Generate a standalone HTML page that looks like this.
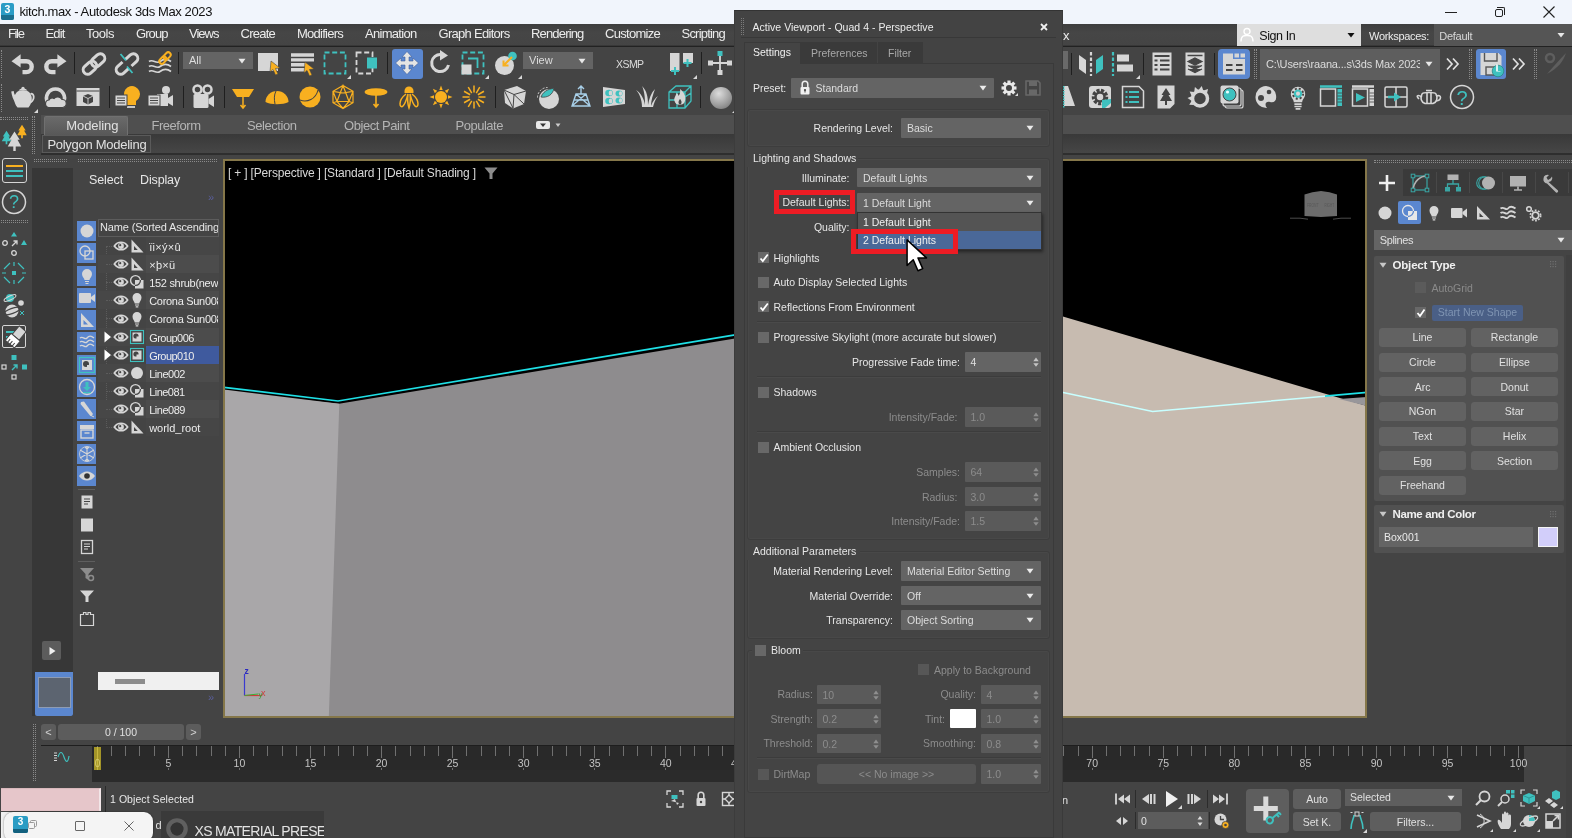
<!DOCTYPE html><html><head><meta charset="utf-8"><title>kitch.max - Autodesk 3ds Max 2023</title><style>*{box-sizing:border-box;margin:0;padding:0}
html,body{width:1572px;height:838px;overflow:hidden;background:#444;font-family:"Liberation Sans",sans-serif;font-size:11px;color:#e4e4e4}
.a{position:absolute}
.t{position:absolute;white-space:nowrap;line-height:1}
svg{position:absolute;overflow:visible}
#app{position:absolute;left:0;top:0;width:1572px;height:838px;overflow:hidden;will-change:transform}
</style></head><body><div id="app">
<!-- sec_top -->
<div class="a" style="left:0px;top:0px;width:1572px;height:24px;background:#f1f5fc;"></div>
<div class="a" style="left:1px;top:3px;width:13px;height:17px;background:#2a9cc6;border-radius:2px"></div>
<div class="a" style="left:1px;top:15px;width:13px;height:5px;background:#1b6e8e;border-radius:0 0 2px 2px"></div>
<div class="t" style="top:4.2px;font-size:10.5px;color:#fff;left:-142.50px;width:300px;text-align:center;font-weight:bold;">3</div>
<div class="t" style="top:4.9px;font-size:13px;color:#111;letter-spacing:-0.386px;left:19.5px;">kitch.max - Autodesk 3ds Max 2023</div>
<div class="a" style="left:1445px;top:12px;width:12px;height:1px;background:#222;"></div>
<div class="a" style="left:1495px;top:9px;width:8px;height:8px;border:1px solid #222;border-radius:2px"></div>
<div class="a" style="left:1497px;top:7px;width:8px;height:8px;border-top:1px solid #222;border-right:1px solid #222;border-radius:0 2px 0 0"></div>
<svg style="left:1541.0px;top:4.0px" width="16" height="16" viewBox="-8.0 -8.0 16 16"><path d="M-5.5-5.5L5.5 5.5M5.5-5.5L-5.5 5.5" stroke="#222" stroke-width="1.1" fill="none"/></svg>
<div class="a" style="left:0px;top:24px;width:1572px;height:22px;background:#444;background:linear-gradient(#3e3e3e,#464646 40%,#444)"></div>
<div class="a" style="left:0px;top:45px;width:1572px;height:1px;background:#383838;"></div>
<div class="a" style="left:0px;top:46px;width:1572px;height:1px;background:#222;"></div>
<div class="t" style="top:27.2px;font-size:13px;color:#ececec;letter-spacing:-1.361px;left:8px;">File</div>
<div class="t" style="top:27.2px;font-size:13px;color:#ececec;letter-spacing:-0.851px;left:45.5px;">Edit</div>
<div class="t" style="top:27.2px;font-size:13px;color:#ececec;letter-spacing:-0.470px;left:86px;">Tools</div>
<div class="t" style="top:27.2px;font-size:13px;color:#ececec;letter-spacing:-0.927px;left:136px;">Group</div>
<div class="t" style="top:27.2px;font-size:13px;color:#ececec;letter-spacing:-0.988px;left:189px;">Views</div>
<div class="t" style="top:27.2px;font-size:13px;color:#ececec;letter-spacing:-0.753px;left:240.5px;">Create</div>
<div class="t" style="top:27.2px;font-size:13px;color:#ececec;letter-spacing:-0.748px;left:297px;">Modifiers</div>
<div class="t" style="top:27.2px;font-size:13px;color:#ececec;letter-spacing:-0.701px;left:365px;">Animation</div>
<div class="t" style="top:27.2px;font-size:13px;color:#ececec;letter-spacing:-0.708px;left:438.5px;">Graph Editors</div>
<div class="t" style="top:27.2px;font-size:13px;color:#ececec;letter-spacing:-0.832px;left:531px;">Rendering</div>
<div class="t" style="top:27.2px;font-size:13px;color:#ececec;letter-spacing:-0.712px;left:605px;">Customize</div>
<div class="t" style="top:27.2px;font-size:13px;color:#ececec;letter-spacing:-0.786px;left:681.5px;">Scripting</div>
<div class="t" style="top:28.5px;font-size:13px;color:#ececec;left:1063px;">x</div>
<div class="a" style="left:1237px;top:24px;width:124px;height:22px;background:#dedede;"></div>
<svg style="left:1239.0px;top:27.0px" width="16" height="16" viewBox="-8.0 -8.0 16 16"><circle cx="0" cy="-3.5" r="3" fill="none" stroke="#fff" stroke-width="1.4"/><path d="M-6 6.5C-6 0-2.5 0.5 0 0.5S6 0 6 6.5" fill="none" stroke="#fff" stroke-width="1.4"/></svg>
<div class="t" style="top:29.5px;font-size:12.5px;color:#111;letter-spacing:-0.417px;left:1259.3px;">Sign In</div>
<svg style="left:1346.0px;top:30.0px" width="10" height="10" viewBox="-5.0 -5.0 10 10"><path d="M-3.5-2h7L0 2.5z" fill="#111"/></svg>
<div class="t" style="top:30.5px;font-size:11px;color:#ececec;letter-spacing:-0.306px;left:1369px;">Workspaces:</div>
<div class="a" style="left:1434px;top:24px;width:138px;height:22px;background:#555;"></div>
<div class="t" style="top:30.5px;font-size:11px;color:#d8d8d8;letter-spacing:-0.265px;left:1439.3px;">Default</div>
<svg style="left:1556.0px;top:29.5px" width="10" height="10" viewBox="-5.0 -5.0 10 10"><path d="M-3.5-2h7L0 2.5z" fill="#e8e8e8"/></svg>
<div class="a" style="left:0px;top:47px;width:1572px;height:67px;background:#444;"></div>
<div class="a" style="left:1px;top:50px;width:1px;height:28px;border-left:1px dotted #8a8a8a"></div>
<div class="a" style="left:1px;top:84px;width:1px;height:28px;border-left:1px dotted #8a8a8a"></div>
<svg style="left:6.0px;top:47.0px" width="32" height="32" viewBox="-16.0 -16.0 32 32"><path d="M-10.500-1.700L-1.400-8.700V4.500z" fill="#d6d6d6"/><path d="M-2-1.700H4.300A5.400 5.400 0 0 1 4.300 9.100H0.500" fill="none" stroke="#d6d6d6" stroke-width="4.400"/></svg>
<svg style="left:39.5px;top:47.0px" width="32" height="32" viewBox="-16.0 -16.0 32 32"><g transform="scale(-1,1)"><path d="M-10.500-1.700L-1.400-8.700V4.500z" fill="#d6d6d6"/><path d="M-2-1.700H4.300A5.400 5.400 0 0 1 4.300 9.100H0.500" fill="none" stroke="#d6d6d6" stroke-width="4.400"/></g></svg>
<div class="a" style="left:74px;top:52px;width:1px;height:22px;background:#1f1f1f;"></div>
<svg style="left:77.0px;top:47.0px" width="32" height="32" viewBox="-16.0 -16.0 32 32"><g transform="translate(1,1) rotate(-42)"><rect x="-13" y="-4.500" width="15" height="9" rx="4.500" fill="none" stroke="#d6d6d6" stroke-width="3"/><rect x="-2" y="-4.500" width="15" height="9" rx="4.500" fill="none" stroke="#d6d6d6" stroke-width="3"/></g></svg>
<svg style="left:110.0px;top:47.0px" width="32" height="32" viewBox="-16.0 -16.0 32 32"><g transform="translate(1,1) rotate(-42)"><path d="M-2-4.500H-8.500A4.500 4.500 0 0 0-8.500 4.500H-2M2-4.500H8.500A4.500 4.500 0 0 1 8.500 4.500H2" fill="none" stroke="#d6d6d6" stroke-width="3"/></g><path d="M-5.500-9L0-2.500M1 3.500L6.500 10" stroke="#3fc1bf" stroke-width="1.800"/></svg>
<svg style="left:144.0px;top:47.0px" width="32" height="32" viewBox="-16.0 -16.0 32 32"><path d="M-11-1.500C-7-4.500-4 1.500 0-1.500S7-4.500 11-1.500M-11 3.500C-7 .5-4 6.500 0 3.500S7 .5 11 3.500M-11 8.500C-7 5.500-4 11.500 0 8.500S7 5.500 11 8.500" fill="none" stroke="#d6d6d6" stroke-width="1.7"/><g transform="translate(5,-5) rotate(-45)"><rect x="-7" y="-2.500" width="8" height="5" rx="2.500" fill="none" stroke="#f8b020" stroke-width="2"/><rect x="-1" y="-2.500" width="8" height="5" rx="2.500" fill="none" stroke="#f8b020" stroke-width="2"/></g></svg>
<div class="a" style="left:178px;top:52px;width:1px;height:22px;background:#1f1f1f;"></div>
<div class="a" style="left:183px;top:52px;width:70px;height:17px;background:#646464;"></div><div class="t" style="top:55.0px;font-size:11px;color:#dcdcdc;left:189px;">All</div><svg style="left:237.0px;top:55.5px" width="10" height="10" viewBox="-5.0 -5.0 10 10"><path d="M-3.5-2.2h7L0 2.6z" fill="#e8e8e8"/></svg>
<svg style="left:253.0px;top:47.0px" width="32" height="32" viewBox="-16.0 -16.0 32 32"><rect x="-11" y="-10" width="20" height="18" fill="#d6d6d6"/><path d="M2-2L11 5L6.500 5.500L9 11L6.500 12L4 6.500L1 9z" fill="#f8b020" stroke="#444" stroke-width=".6"/></svg>
<svg style="left:286.0px;top:47.0px" width="32" height="32" viewBox="-16.0 -16.0 32 32"><path d="M-11-8h23M-11-3.100h23M-11 1.800h15M-11 6.700h15" stroke="#d6d6d6" stroke-width="3.400"/><path d="M3 -1L12 6L7.500 6.500L10 12L7.500 13L5 7.500L2 10z" fill="#f8b020" stroke="#444" stroke-width=".6"/></svg>
<svg style="left:319.0px;top:47.0px" width="32" height="32" viewBox="-16.0 -16.0 32 32"><rect x="-10.500" y="-10.500" width="21" height="21" fill="none" stroke="#3fc1bf" stroke-width="1.800" stroke-dasharray="5 2.700"/></svg>
<svg style="left:347px;top:75px" width="4" height="4" viewBox="0 0 4 4"><path d="M4 0V4H0z" fill="#d8d8d8"/></svg>
<svg style="left:351.0px;top:47.0px" width="32" height="32" viewBox="-16.0 -16.0 32 32"><rect x="-10.500" y="-10.500" width="16" height="21" fill="none" stroke="#d6d6d6" stroke-width="1.800" stroke-dasharray="5 2.700"/><rect x="0" y="-5.500" width="10" height="11" fill="#3fc1bf"/></svg>
<div class="a" style="left:387px;top:52px;width:1px;height:22px;background:#1f1f1f;"></div>
<div class="a" style="left:391.5px;top:49px;width:31.5px;height:30px;background:#5b87cf;border-radius:3px"></div>
<svg style="left:391.0px;top:47.0px" width="32" height="32" viewBox="-16.0 -16.0 32 32"><path d="M0-11.500L5-6H2V-2H6V-5L11.500 0L6 5V2H2V6H5L0 11.500L-5 6H-2V2H-6V5L-11.500 0L-6-5V-2H-2V-6H-5z" fill="#e4e4e4" stroke="#40609a" stroke-width=".6"/></svg>
<svg style="left:424.0px;top:47.0px" width="32" height="32" viewBox="-16.0 -16.0 32 32"><path d="M8.500 2A8.500 8.500 0 1 1 1-8.400" fill="none" stroke="#d6d6d6" stroke-width="3"/><path d="M0-13L8-7.500L0-2.500z" fill="#d6d6d6"/></svg>
<svg style="left:457.0px;top:47.0px" width="32" height="32" viewBox="-16.0 -16.0 32 32"><rect x="-10.500" y="-10.500" width="21" height="21" fill="none" stroke="#3fc1bf" stroke-width="1.800" stroke-dasharray="5 2.700"/><rect x="-11.500" y="1.500" width="10" height="10" fill="#d6d6d6"/><path d="M-5-4.500H4.500V5" fill="none" stroke="#3fc1bf" stroke-width="1.800"/></svg>
<svg style="left:485px;top:75px" width="4" height="4" viewBox="0 0 4 4"><path d="M4 0V4H0z" fill="#d8d8d8"/></svg>
<svg style="left:490.0px;top:47.0px" width="32" height="32" viewBox="-16.0 -16.0 32 32"><circle cx="-1.500" cy="2.500" r="9.500" fill="#d6d6d6"/><circle cx="6.500" cy="-7" r="4.300" fill="#3fc1bf"/><path d="M6-6L-2 2M-2.500-2.500V2.500H2.500" fill="none" stroke="#f8b020" stroke-width="2"/></svg>
<svg style="left:518px;top:75px" width="4" height="4" viewBox="0 0 4 4"><path d="M4 0V4H0z" fill="#d8d8d8"/></svg>
<div class="a" style="left:523px;top:52px;width:70px;height:17px;background:#646464;"></div><div class="t" style="top:55.0px;font-size:11px;color:#dcdcdc;left:529px;">View</div><svg style="left:577.0px;top:55.5px" width="10" height="10" viewBox="-5.0 -5.0 10 10"><path d="M-3.5-2.2h7L0 2.6z" fill="#e8e8e8"/></svg>
<div class="t" style="top:59.2px;font-size:10.5px;color:#dcdcdc;letter-spacing:-0.564px;left:616px;">XSMP</div>
<svg style="left:666.0px;top:47.0px" width="32" height="32" viewBox="-16.0 -16.0 32 32"><path d="M-12-10h9.500V8H-12zM1-10H11V0H1z" fill="#d6d6d6"/><path d="M-7 4v8M-11 8h8M5.500-4v8M1.500 0h8" stroke="#3fc1bf" stroke-width="2"/></svg>
<svg style="left:693px;top:75px" width="4" height="4" viewBox="0 0 4 4"><path d="M4 0V4H0z" fill="#d8d8d8"/></svg>
<div class="a" style="left:701px;top:52px;width:1px;height:22px;background:#1f1f1f;"></div>
<svg style="left:704.0px;top:47.0px" width="32" height="32" viewBox="-16.0 -16.0 32 32"><path d="M0-9V9M-10 0H10" stroke="#d6d6d6" stroke-width="1.800"/><rect x="-2.500" y="-12" width="5" height="5" fill="#3fc1bf"/><rect x="-2.500" y="7" width="5" height="5" fill="#d6d6d6"/><rect x="-12" y="-2.500" width="5" height="5" fill="#d6d6d6"/><rect x="7" y="-2.500" width="5" height="5" fill="#d6d6d6"/></svg>
<div class="a" style="left:1063px;top:51px;width:5px;height:18px;background:#6a6a6a;"></div>
<div class="a" style="left:1071px;top:53.2px;width:1px;height:22.0px;background:#1f1f1f;"></div>
<svg style="left:1076.0px;top:48.2px" width="32" height="32" viewBox="-16.0 -16.0 32 32"><path d="M-13-9L-6-4V10L-13 5z" fill="#d6d6d6"/><path d="M4-4L11-9V5L4 10z" fill="#3fc1bf"/><path d="M-1-12V12" stroke="#d6d6d6" stroke-width="2.200" stroke-dasharray="3.500 2"/></svg>
<svg style="left:1106.0px;top:48.2px" width="32" height="32" viewBox="-16.0 -16.0 32 32"><path d="M-9-12V12" stroke="#3fc1bf" stroke-width="2.200" stroke-dasharray="3.500 2"/><rect x="-5" y="-9.500" width="12" height="7" fill="#d6d6d6"/><rect x="-5" y=".5" width="16" height="7" fill="#d6d6d6"/></svg>
<svg style="left:1136px;top:75px" width="4" height="4" viewBox="0 0 4 4"><path d="M4 0V4H0z" fill="#d8d8d8"/></svg>
<div class="a" style="left:1143px;top:53.2px;width:1px;height:22.0px;background:#1f1f1f;"></div>
<svg style="left:1146.0px;top:48.2px" width="32" height="32" viewBox="-16.0 -16.0 32 32"><rect x="-9.500" y="-11.500" width="19" height="23" fill="#d6d6d6"/><path d="M-7.500-8h15M-2-3.500h9.500M-2 1h9.500M-2 5.500h9.500M-7.500-3.500h3M-7.500 1h3M-7.500 5.500h3" stroke="#444" stroke-width="2"/></svg>
<svg style="left:1179.0px;top:48.2px" width="32" height="32" viewBox="-16.0 -16.0 32 32"><rect x="-9.500" y="-11.500" width="19" height="23" fill="#d6d6d6"/><path d="M-7.500-8.500h15" stroke="#444" stroke-width="1.500"/><path d="M0-6L7-2.500L0 1L-7-2.500zM-7 1.500L0 5L7 1.500M-7 5L0 8.500L7 5" fill="#444" stroke="#444" stroke-width="1.200"/></svg>
<div class="a" style="left:1214px;top:53.2px;width:1px;height:22.0px;background:#1f1f1f;"></div>
<div class="a" style="left:1218px;top:49px;width:32px;height:30px;border:2px solid #5b87cf;border-radius:4px;background:#5b87cf"></div>
<svg style="left:1218.0px;top:48.0px" width="32" height="32" viewBox="-16.0 -16.0 32 32"><path d="M-11-10.500H-1V-5H11V10.500H-11z" fill="#d6d6d6"/><rect x="0.500" y="-10.500" width="4.500" height="4" fill="#d6d6d6"/><rect x="6.500" y="-10.500" width="4.500" height="4" fill="#d6d6d6"/><path d="M-8 1h6.500M-8 6h6.500M2 1h6.500M2 6h6.500" stroke="#444" stroke-width="2.200"/></svg>
<div class="a" style="left:1254px;top:49.0px;width:3px;height:30px;border-left:1px dotted #8a8a8a;border-right:1px dotted #8a8a8a"></div>
<div class="a" style="left:1260px;top:49px;width:180px;height:31px;background:#5e5e5e;"></div>
<div class="t" style="left:1266px;top:59px;font-size:11px;color:#dcdcdc;width:153.5px;overflow:hidden;letter-spacing:-0.154px">C:\Users\raana...s\3ds Max 2023</div>
<svg style="left:1424.0px;top:59.0px" width="10" height="10" viewBox="-5.0 -5.0 10 10"><path d="M-3.500-2.200h7L0 2.600z" fill="#e8e8e8"/></svg>
<svg style="left:1437.0px;top:48.2px" width="32" height="32" viewBox="-16.0 -16.0 32 32"><path d="M-6-5.500L-1 0L-6 5.500M0-5.500L5 0L0 5.500" fill="none" stroke="#e0e0e0" stroke-width="1.700"/></svg>
<div class="a" style="left:1469px;top:49.0px;width:3px;height:30px;border-left:1px dotted #8a8a8a;border-right:1px dotted #8a8a8a"></div>
<div class="a" style="left:1476px;top:49px;width:30px;height:30px;background:#5b87cf;border-radius:3px"></div>
<svg style="left:1475.0px;top:48.0px" width="32" height="32" viewBox="-16.0 -16.0 32 32"><path d="M-10.500-11H7.500L10.500-8V11H-10.500z" fill="#d6d6d6"/><rect x="-6" y="-11" width="12" height="8.500" fill="#5b87cf" opacity=".0"/><path d="M-6.500-11V-3H6V-11" fill="none" stroke="#555" stroke-width="1.400"/><rect x="-5" y="3" width="9" height="8" fill="none" stroke="#555" stroke-width="1.400"/><circle cx="7" cy="7" r="5.800" fill="#3fc1bf" stroke="#2a8a88" stroke-width=".8"/><path d="M6-10.500V7.500H9.500" fill="none" stroke="#fff" stroke-width="1.600" transform="translate(0,0) scale(1,.38) translate(0,11.500)"/></svg>
<svg style="left:1503.0px;top:48.2px" width="32" height="32" viewBox="-16.0 -16.0 32 32"><path d="M-6-5.500L-1 0L-6 5.500M0-5.500L5 0L0 5.500" fill="none" stroke="#e0e0e0" stroke-width="1.700"/></svg>
<div class="a" style="left:1534px;top:49.0px;width:3px;height:30px;border-left:1px dotted #8a8a8a;border-right:1px dotted #8a8a8a"></div>
<svg style="left:1540.0px;top:48.2px" width="32" height="32" viewBox="-16.0 -16.0 32 32"><circle cx="-6" cy="-6" r="4" fill="none" stroke="#5e5e5e" stroke-width="2.500"/><path d="M10-11C7-2 2 4-9 10C-4 4 3-4 10-11z" fill="#5e5e5e"/></svg>
<svg style="left:6.0px;top:81.0px" width="32" height="32" viewBox="-16.0 -16.0 32 32"><path d="M-5.500-4.500C-3-7.500 5-7.500 7.500-4.500C10.500-1 11 5 6.500 10.500H-4.500C-9 5-8.500-1-5.500-4.500z" fill="#d6d6d6"/><path d="M-3.500-6.500A4.800 3 0 0 1 5.500-6.500z" fill="#d6d6d6"/><circle cx="1" cy="-8.600" r="1.700" fill="#d6d6d6"/><path d="M-6.500 5.500C-9 3-10-1-10.800-5.500L-8.300-6C-8-3-7-1.500-5.500-.5z" fill="#d6d6d6"/><path d="M8.500-3C12-4.500 13.500 2 8.500 5.500" fill="none" stroke="#d6d6d6" stroke-width="1.800"/></svg>
<svg style="left:34px;top:109px" width="4" height="4" viewBox="0 0 4 4"><path d="M4 0V4H0z" fill="#d8d8d8"/></svg>
<svg style="left:39.0px;top:81.0px" width="32" height="32" viewBox="-16.0 -16.0 32 32"><path d="M-7.300 5.500A9 9 0 1 1 8.300 5.500" fill="none" stroke="#d6d6d6" stroke-width="3.600"/><path d="M-6.500 10.500A3.800 3.800 0 0 1-6 3A3.500 3.500 0 0 1-1 1.500A5 5 0 0 1 7 2.500A4 4 0 0 1 7.500 10.500z" fill="#d6d6d6" stroke="#444" stroke-width="1.200"/></svg>
<svg style="left:72.0px;top:81.0px" width="32" height="32" viewBox="-16.0 -16.0 32 32"><rect x="-11.500" y="-9" width="23" height="18" fill="#d6d6d6"/><path d="M-11.500-6H11.500" stroke="#444" stroke-width="1"/><path d="M0-3L5-1V5L0 7.500L-5 5V-1z" fill="#444"/><path d="M-5-1L0 1.500L5-1M0 1.500V7.500" stroke="#d6d6d6" stroke-width=".9" fill="none"/></svg>
<div class="a" style="left:109px;top:86px;width:1px;height:22px;background:#1f1f1f;"></div>
<svg style="left:111.0px;top:81.0px" width="32" height="32" viewBox="-16.0 -16.0 32 32"><path d="M-3-2A8 8 0 1 1 9 4V8H-1V4z" fill="#f8b020"/><path d="M0 10h8" stroke="#d6d6d6" stroke-width="1.800"/><rect x="-12" y="-2" width="12" height="11" fill="#d6d6d6" stroke="#444" stroke-width="1"/><path d="M-10 1h8M-10 3.500h8M-10 6h8" stroke="#444" stroke-width="1.200"/></svg>
<svg style="left:144.0px;top:81.0px" width="32" height="32" viewBox="-16.0 -16.0 32 32"><circle cx="6" cy="-7" r="4" fill="#d6d6d6"/><rect x="-3" y="-3" width="11" height="12" fill="#d6d6d6"/><path d="M8 1L13-2V9L8 6z" fill="#d6d6d6"/><rect x="-12" y="-2" width="12" height="11" fill="#d6d6d6" stroke="#444" stroke-width="1"/><path d="M-10 1h8M-10 3.500h8M-10 6h8" stroke="#444" stroke-width="1.200"/></svg>
<div class="a" style="left:183px;top:86px;width:1px;height:22px;background:#1f1f1f;"></div>
<svg style="left:187.0px;top:81.0px" width="32" height="32" viewBox="-16.0 -16.0 32 32"><circle cx="-5.500" cy="-7.500" r="4" fill="none" stroke="#d6d6d6" stroke-width="2.500"/><circle cx="4.500" cy="-7.500" r="4" fill="none" stroke="#d6d6d6" stroke-width="2.500"/><rect x="-9.500" y="-3" width="15" height="14" rx="1.500" fill="#d6d6d6"/><path d="M5.500 2L11-1.500V10L5.500 6.500z" fill="#d6d6d6"/></svg>
<div class="a" style="left:224px;top:86px;width:1px;height:22px;background:#1f1f1f;"></div>
<svg style="left:227.0px;top:81.0px" width="32" height="32" viewBox="-16.0 -16.0 32 32"><path d="M-11-8H11L6 0H-6z" fill="#f8b020"/><path d="M0 0V11M-2.500 8L0 11L2.500 8" stroke="#f8b020" stroke-width="1.500" fill="none"/></svg>
<svg style="left:261.0px;top:81.0px" width="32" height="32" viewBox="-16.0 -16.0 32 32"><path d="M-11.500 5A11.500 11 0 0 1 11.500 5C6 8-6 8-11.500 5z" fill="#f8b020"/><path d="M-1-6C-3-2-3 2-2 7" stroke="#444" stroke-width="1" fill="none"/></svg>
<svg style="left:294.0px;top:81.0px" width="32" height="32" viewBox="-16.0 -16.0 32 32"><circle r="10.500" fill="#f8b020"/><path d="M-10 3C-3 6 6 2 8-7" stroke="#444" stroke-width="1.100" fill="none"/></svg>
<svg style="left:327.0px;top:81.0px" width="32" height="32" viewBox="-16.0 -16.0 32 32"><path d="M0-11.500L10-5.700V5.700L0 11.500L-10 5.700V-5.700zM0-11.500L-6 4.500H6zM-10-5.700L-6 4.500L0 11.500L6 4.500L10-5.700L0-11.500M-10-5.700L0-4L10-5.700M-10 5.700L-6 4.500M10 5.700L6 4.500" fill="none" stroke="#f8b020" stroke-width="1.200"/></svg>
<svg style="left:360.0px;top:81.0px" width="32" height="32" viewBox="-16.0 -16.0 32 32"><ellipse cx="0" cy="-5" rx="11.500" ry="3.800" fill="#f8b020"/><path d="M0-2V10M-2.500 7L0 10L2.500 7" stroke="#f8b020" stroke-width="1.600" fill="none"/></svg>
<svg style="left:393.0px;top:81.0px" width="32" height="32" viewBox="-16.0 -16.0 32 32"><path d="M-4.500-6A4.500 4.500 0 0 1 4.500-6V-4H-4.500z" fill="#f8b020"/><path d="M-3-3C-12 4-9 12-6 9C-3 6-2 0-1-3M3-3C12 4 9 12 6 9C3 6 2 0 1-3M-1-3C-2 5 0 11 0 11C0 11 2 5 1-3" fill="none" stroke="#f8b020" stroke-width="1.500"/></svg>
<svg style="left:425.0px;top:81.0px" width="32" height="32" viewBox="-16.0 -16.0 32 32"><circle r="6" fill="#f8b020"/><path d="M-1.700-7L0-11.500L1.700-7z" transform="rotate(0)" fill="#f8b020"/><path d="M-1.700-7L0-11.500L1.700-7z" transform="rotate(45)" fill="#f8b020"/><path d="M-1.700-7L0-11.500L1.700-7z" transform="rotate(90)" fill="#f8b020"/><path d="M-1.700-7L0-11.500L1.700-7z" transform="rotate(135)" fill="#f8b020"/><path d="M-1.700-7L0-11.500L1.700-7z" transform="rotate(180)" fill="#f8b020"/><path d="M-1.700-7L0-11.500L1.700-7z" transform="rotate(225)" fill="#f8b020"/><path d="M-1.700-7L0-11.500L1.700-7z" transform="rotate(270)" fill="#f8b020"/><path d="M-1.700-7L0-11.500L1.700-7z" transform="rotate(315)" fill="#f8b020"/></svg>
<svg style="left:458.0px;top:81.0px" width="32" height="32" viewBox="-16.0 -16.0 32 32"><path d="M0-4.500V-11.500" transform="rotate(0)" stroke="#f8b020" stroke-width="1.500"/><path d="M0-4.500V-11.500" transform="rotate(30)" stroke="#f8b020" stroke-width="1.500"/><path d="M0-4.500V-11.500" transform="rotate(60)" stroke="#f8b020" stroke-width="1.500"/><path d="M0-4.500V-11.500" transform="rotate(90)" stroke="#f8b020" stroke-width="1.500"/><path d="M0-4.500V-11.500" transform="rotate(120)" stroke="#f8b020" stroke-width="1.500"/><path d="M0-4.500V-11.500" transform="rotate(150)" stroke="#f8b020" stroke-width="1.500"/><path d="M0-4.500V-11.500" transform="rotate(180)" stroke="#f8b020" stroke-width="1.500"/><path d="M0-4.500V-11.500" transform="rotate(210)" stroke="#f8b020" stroke-width="1.500"/><path d="M0-4.500V-11.500" transform="rotate(240)" stroke="#f8b020" stroke-width="1.500"/><path d="M0-4.500V-11.500" transform="rotate(270)" stroke="#f8b020" stroke-width="1.500"/><path d="M0-4.500V-11.500" transform="rotate(300)" stroke="#f8b020" stroke-width="1.500"/><path d="M0-4.500V-11.500" transform="rotate(330)" stroke="#f8b020" stroke-width="1.500"/></svg>
<div class="a" style="left:495px;top:86px;width:1px;height:22px;background:#1f1f1f;"></div>
<svg style="left:499.0px;top:81.0px" width="32" height="32" viewBox="-16.0 -16.0 32 32"><path d="M-11-7L2-11L11-6L9 7L-2 11.500L-10 6z" fill="#d6d6d6"/><path d="M-11-7L-1-2.500L11-6M-1-2.500L-2 11.500M-1-2.500L9 7M-11-7L-2 11" stroke="#444" stroke-width="1" fill="none"/></svg>
<svg style="left:532.0px;top:81.0px" width="32" height="32" viewBox="-16.0 -16.0 32 32"><circle cx="1" cy="2" r="10" fill="#d6d6d6"/><path d="M-9 2A10 10 0 0 1 1-8" fill="none" stroke="#d6d6d6" stroke-width="1" stroke-dasharray="2 1.500" transform="translate(-1.500,-1.500)"/><path d="M-7 0C-4-8 4-8 6-9C5-2-1 1-7 0z" fill="#3fc1bf" stroke="#444" stroke-width=".8"/></svg>
<svg style="left:565.0px;top:81.0px" width="32" height="32" viewBox="-16.0 -16.0 32 32"><path d="M0-11V-3M-3-8L0-11L3-8M-5-3H5L9 9H-9zM-5-3L9 9M5-3L-9 9M-7 3H7" fill="none" stroke="#a8cfe8" stroke-width="1.400"/></svg>
<svg style="left:598.0px;top:81.0px" width="32" height="32" viewBox="-16.0 -16.0 32 32"><path d="M-11-10L11-7V7L-11 10z" fill="#d6d6d6"/><ellipse cx="-5" cy="-4" rx="3.800" ry="3.300" fill="#3fc1bf"/><ellipse cx="5" cy="-3.500" rx="3.500" ry="3" fill="#3fc1bf"/><ellipse cx="-5" cy="4" rx="3.800" ry="3.300" fill="#3fc1bf"/><ellipse cx="5" cy="3.500" rx="3.500" ry="3" fill="#3fc1bf"/><ellipse cx="-3.500" cy="-4" rx="1.800" ry="2.600" fill="#d6d6d6"/><ellipse cx="6.500" cy="-3.500" rx="1.600" ry="2.300" fill="#d6d6d6"/><ellipse cx="-3.500" cy="4" rx="1.800" ry="2.600" fill="#d6d6d6"/><ellipse cx="6.500" cy="3.500" rx="1.600" ry="2.300" fill="#d6d6d6"/></svg>
<svg style="left:631.0px;top:81.0px" width="32" height="32" viewBox="-16.0 -16.0 32 32"><path d="M-5 10C-5 2-8-4-11-7C-6-4-3 2-2 8C-2-1-3-7-5-11C0-6 1 0 1 8C2 2 4-4 8-8C6-2 4 3 4 9C6 4 8 1 11-1C8 3 7 6 6 10z" fill="#d6d6d6"/></svg>
<svg style="left:664.0px;top:81.0px" width="32" height="32" viewBox="-16.0 -16.0 32 32"><path d="M-11-5L-4-11H11V4L5 11H-11zM-11-5H5V11M5-5L11-11M-11 3H5M-3-5V11M3.500-3.500L11-11M5 0L11-4" fill="none" stroke="#3fc1bf" stroke-width="1.300"/><path d="M0-8C5-4 6 0 5 4A5.500 5.500 0 0 1-5.500 4C-6.500 1-4-1-3.500-4C-2-3-1.500-2-1.500-1C0-3 0.500-5 0-8z" fill="#d6d6d6"/><path d="M0 2C2 4 2 7 0 7.500C-2 7-2 4 0 2z" fill="#444"/></svg>
<div class="a" style="left:700px;top:86px;width:1px;height:22px;background:#1f1f1f;"></div>
<div class="a" style="left:710px;top:87px;width:22px;height:22px;border-radius:50%;background:radial-gradient(circle at 40% 30%,#dcdcdc,#a0a0a0 55%,#6a6a6a)"></div>
<svg style="left:732px;top:109px" width="4" height="4" viewBox="0 0 4 4"><path d="M4 0V4H0z" fill="#d8d8d8"/></svg>
<svg style="left:1052.0px;top:81.0px" width="32" height="32" viewBox="-16.0 -16.0 32 32"><path d="M0-11L7 9H-4V-11z" fill="#d6d6d6"/><path d="M-5-11V11" stroke="#3fc1bf" stroke-width="3" stroke-dasharray="1.500 1"/></svg>
<svg style="left:1084.0px;top:81.0px" width="32" height="32" viewBox="-16.0 -16.0 32 32"><rect x="-11" y="-11" width="22" height="22" rx="3" fill="#d6d6d6"/><circle r="6.500" fill="none" stroke="#444" stroke-width="3.500" stroke-dasharray="3 1.400"/><circle r="4.500" fill="none" stroke="#444" stroke-width="2.500"/><path d="M2 3L11 2V6L5 11H2z" fill="#3fc1bf"/></svg>
<svg style="left:1117.0px;top:81.0px" width="32" height="32" viewBox="-16.0 -16.0 32 32"><path d="M-10.500-10.500H6L10.500-6V10.500H-10.500z" fill="#444" stroke="#d6d6d6" stroke-width="1.500"/><path d="M-4-5H6M-4 0H6M-4 5H6" stroke="#3fc1bf" stroke-width="2"/><path d="M-7.500-5h2M-7.500 0h2M-7.500 5h2" stroke="#3fc1bf" stroke-width="2"/></svg>
<svg style="left:1150.0px;top:81.0px" width="32" height="32" viewBox="-16.0 -16.0 32 32"><path d="M-8.500-11.500H8.500V7L4 11.500H-8.500z" fill="#d6d6d6"/><path d="M0-9L4.500-2H2.500L6 4H1V8H-1V4H-6L-2.500-2H-4.500z" fill="#444"/></svg>
<svg style="left:1183.0px;top:81.0px" width="32" height="32" viewBox="-16.0 -16.0 32 32"><circle cx="1" cy="1.500" r="7.500" fill="none" stroke="#d6d6d6" stroke-width="3.500"/><path d="M-2.500-8.500L0-12.500L2-8.500z" transform="translate(1,1.500) rotate(-120)" fill="#d6d6d6"/><path d="M-2.500-8.500L0-12.500L2-8.500z" transform="translate(1,1.500) rotate(-88)" fill="#d6d6d6"/><path d="M-2.500-8.500L0-12.500L2-8.500z" transform="translate(1,1.500) rotate(-56)" fill="#d6d6d6"/><path d="M-2.500-8.500L0-12.500L2-8.500z" transform="translate(1,1.500) rotate(-24)" fill="#d6d6d6"/><path d="M-2.500-8.500L0-12.500L2-8.500z" transform="translate(1,1.500) rotate(8)" fill="#d6d6d6"/><path d="M-2.500-8.500L0-12.500L2-8.500z" transform="translate(1,1.500) rotate(40)" fill="#d6d6d6"/></svg>
<svg style="left:1216.0px;top:81.0px" width="32" height="32" viewBox="-16.0 -16.0 32 32"><rect x="-7" y="-7" width="18" height="18" rx="2" fill="none" stroke="#d6d6d6" stroke-width="1.200"/><rect x="-9" y="-9" width="18" height="18" rx="2" fill="#444" stroke="#d6d6d6" stroke-width="1.200"/><rect x="-11.500" y="-11.500" width="18" height="18" rx="2" fill="#d6d6d6"/><circle cx="-2.500" cy="-2.500" r="6.500" fill="#3fc1bf" stroke="#444" stroke-width="1"/><circle cx="-4.500" cy="-5" r="1.600" fill="#e8ffff"/></svg>
<svg style="left:1249.0px;top:81.0px" width="32" height="32" viewBox="-16.0 -16.0 32 32"><path d="M1-11A11 11 0 1 0 2 11C-1 7 1 4 5 5C9 6 12 4 11-2A11 11 0 0 0 1-11z" fill="#d6d6d6"/><circle cx="-4" cy="1" r="3" fill="#444"/><circle cx="4" cy="-5" r="2.300" fill="#444"/></svg>
<svg style="left:1282.0px;top:81.0px" width="32" height="32" viewBox="-16.0 -16.0 32 32"><g transform="translate(0,.5) scale(1.200)"><path d="M-6-3A6 6 0 1 1 6-3C6 0 3.500 1.500 3.500 4H-3.500C-3.500 1.500-6 0-6-3z" fill="#d6d6d6"/><path d="M-3 5.500h6M-3 7.500h6M-2 9.500h4" stroke="#d6d6d6" stroke-width="1.300"/><circle cy="-3.200" r="2.600" fill="none" stroke="#3fc1bf" stroke-width="1.800"/><circle cy="-3.200" r="4.300" fill="none" stroke="#444" stroke-width="1.500" stroke-dasharray="1.700 1.700"/></g></svg>
<svg style="left:1315.0px;top:81.0px" width="32" height="32" viewBox="-16.0 -16.0 32 32"><rect x="-10.500" y="-8" width="15" height="17" fill="none" stroke="#d6d6d6" stroke-width="1.500"/><path d="M-11-10.500H11" stroke="#3fc1bf" stroke-width="2.500"/><rect x="6.500" y="-8" width="4.500" height="17" fill="#3fc1bf"/><path d="M6.500-4h4.500M6.500-1h4.500M6.500 2h4.500M6.500 5h4.500" stroke="#444" stroke-width=".8"/></svg>
<svg style="left:1347.0px;top:81.0px" width="32" height="32" viewBox="-16.0 -16.0 32 32"><rect x="-10.500" y="-8" width="15" height="17" fill="none" stroke="#d6d6d6" stroke-width="1.500"/><path d="M-11-10.500H11" stroke="#d6d6d6" stroke-width="2.500"/><rect x="6.500" y="-8" width="4.500" height="17" fill="#d6d6d6"/><path d="M6.500-4h4.500M6.500-1h4.500M6.500 2h4.500M6.500 5h4.500" stroke="#444" stroke-width=".8"/><path d="M-7-4L2 .5L-7 5z" fill="#3fc1bf"/></svg>
<svg style="left:1380.0px;top:81.0px" width="32" height="32" viewBox="-16.0 -16.0 32 32"><rect x="-11" y="-10" width="22" height="20" rx="1.500" fill="none" stroke="#d6d6d6" stroke-width="1.500"/><path d="M0-10V10M-11 0H11" stroke="#d6d6d6" stroke-width="1.500"/><path d="M-8-1.300H-2V-4.500L5 0L-2 4.500V1.300H-8z" fill="#3fc1bf"/></svg>
<svg style="left:1413.0px;top:81.0px" width="32" height="32" viewBox="-16.0 -16.0 32 32"><path d="M-7-3C-6-5 6-5 7-3C9 1 8 5 4 6.500H-4C-8 5-9 1-7-3z" fill="none" stroke="#d6d6d6" stroke-width="1.600"/><path d="M-3-6.500h6M-7 0C-12-3-13-1-10 2M7-1C13-3 13 3 7 4M-2-4V6M2-4V6" fill="none" stroke="#d6d6d6" stroke-width="1.600"/></svg>
<svg style="left:1446.0px;top:81.0px" width="32" height="32" viewBox="-16.0 -16.0 32 32"><circle r="11.500" fill="none" stroke="#d6d6d6" stroke-width="1.500"/></svg>
<div class="t" style="top:87.5px;font-size:20px;color:#3fc1bf;left:1312.00px;width:300px;text-align:center;">?</div>
<div class="a" style="left:0px;top:117px;width:28px;height:3px;border-top:1px dotted #8a8a8a;border-bottom:1px dotted #8a8a8a"></div>
<div class="a" style="left:32px;top:116px;width:3px;height:38px;border-left:1px dotted #8a8a8a;border-right:1px dotted #8a8a8a"></div>
<svg style="left:-2.0px;top:122.0px" width="32" height="32" viewBox="-16.0 -16.0 32 32"><g transform="translate(-7.500,0) scale(1.050)"><path d="M0-7L3.500-1.500H2L4.500 3H.8V6H-.8V3H-4.500L-2 -1.500H-3.500z" fill="#3fc1bf"/></g><g transform="translate(8,-6) scale(1.050)"><path d="M0-7L3.500-1.500H2L4.500 3H.8V6H-.8V3H-4.500L-2 -1.500H-3.500z" fill="#f8b020"/></g><g transform="translate(.5,4) scale(1.500)"><path d="M0-7L3.500-1.500H2L4.500 3H.8V6H-.8V3H-4.500L-2 -1.500H-3.500z" fill="#d6d6d6"/></g></svg>
<div class="a" style="left:41px;top:115px;width:693px;height:19px;background:#4f4f4f;"></div>
<div class="a" style="left:41px;top:134px;width:693px;height:19px;background:#3a3a3a;background:linear-gradient(#393939,#464646)"></div>
<div class="a" style="left:41px;top:153px;width:693px;height:2px;background:#2e2e2e;"></div>
<div class="a" style="left:44px;top:116px;width:84px;height:19px;background:linear-gradient(#6a6a6a,#585858);border:1px solid #707070;border-bottom:none;border-radius:2px 2px 0 0"></div>
<div class="t" style="top:119.0px;font-size:13px;color:#e0e0e0;letter-spacing:-0.094px;left:66.3px;">Modeling</div>
<div class="t" style="top:118.9px;font-size:13px;color:#b4b4b4;letter-spacing:-0.466px;left:151.5px;">Freeform</div>
<div class="t" style="top:118.9px;font-size:13px;color:#b4b4b4;letter-spacing:-0.442px;left:247px;">Selection</div>
<div class="t" style="top:118.9px;font-size:13px;color:#b4b4b4;letter-spacing:-0.443px;left:344px;">Object Paint</div>
<div class="t" style="top:118.9px;font-size:13px;color:#b4b4b4;letter-spacing:-0.478px;left:455.5px;">Populate</div>
<div class="a" style="left:536px;top:121px;width:14px;height:8px;background:#e8e8e8;border-radius:2px"></div>
<svg style="left:538.0px;top:120.0px" width="10" height="10" viewBox="-5.0 -5.0 10 10"><path d="M-3-1.500h6L0 2z" fill="#333"/></svg>
<svg style="left:553.0px;top:120.0px" width="10" height="10" viewBox="-5.0 -5.0 10 10"><path d="M-2.500-1.500h5L0 2z" fill="#ccc"/></svg>
<div class="a" style="left:42px;top:135px;width:109px;height:18px;background:#414141;border:1px solid #5a5a5a"></div>
<div class="t" style="top:138.0px;font-size:13px;color:#e0e0e0;letter-spacing:-0.272px;left:47.4px;">Polygon Modeling</div>
<div class="a" style="left:1062px;top:115px;width:510px;height:19px;background:#4f4f4f;"></div>
<div class="a" style="left:1062px;top:134px;width:510px;height:19px;background:#3a3a3a;background:linear-gradient(#393939,#464646)"></div>
<div class="a" style="left:1062px;top:153px;width:510px;height:2px;background:#2e2e2e;"></div>
<!-- sec_left -->
<div class="a" style="left:0px;top:155px;width:224px;height:565px;background:#444;"></div>
<div class="a" style="left:2px;top:158px;width:25px;height:25px;border:1.500px solid #d6d6d6;border-radius:3px 7px 3px 3px"></div>
<div class="a" style="left:6px;top:165px;width:17px;height:2px;background:#f8b020;"></div>
<div class="a" style="left:6px;top:170px;width:17px;height:2px;background:#3fc1bf;"></div>
<div class="a" style="left:6px;top:175px;width:17px;height:2px;background:#3fc1bf;"></div>
<svg style="left:-2.0px;top:185.5px" width="32" height="32" viewBox="-16.0 -16.0 32 32"><circle r="11.500" fill="none" stroke="#d6d6d6" stroke-width="1.500"/></svg>
<div class="t" style="top:193.0px;font-size:18px;color:#3fc1bf;left:-136.00px;width:300px;text-align:center;">?</div>
<div class="a" style="left:1px;top:220px;width:27px;height:3px;border-top:1px dotted #8a8a8a;border-bottom:1px dotted #8a8a8a"></div>
<svg style="left:-2.0px;top:226.5px" width="32" height="32" viewBox="-16.0 -16.0 32 32"><path d="M0-11L3-6.500H-3z" fill="#3fc1bf"/><path d="M10-3L13 2H7z" fill="#3fc1bf"/><circle cx="-9" cy="0" r="2.300" fill="none" stroke="#d6d6d6" stroke-width="1.300"/><circle cx="0" cy="10" r="2.300" fill="none" stroke="#d6d6d6" stroke-width="1.300"/><path d="M-2 3L3-2M-.5-2H3V1.500" fill="none" stroke="#d6d6d6" stroke-width="1.300"/></svg>
<svg style="left:-2.0px;top:257.0px" width="32" height="32" viewBox="-16.0 -16.0 32 32"><path d="M-4-10L-10-4M4-10L10-4M-10 4L-4 10M10 4L4 10M0-11V-7M0 7V11M-12 0H-8M8 0H12" stroke="#3fc1bf" stroke-width="1.200" fill="none"/><rect x="-2" y="-2" width="4" height="4" fill="#3fc1bf"/></svg>
<svg style="left:-2.0px;top:289.0px" width="32" height="32" viewBox="-16.0 -16.0 32 32"><circle cx="-4" cy="-7" r="4" fill="#3fc1bf"/><ellipse cx="-4" cy="-7" rx="6.500" ry="2" fill="none" stroke="#d6d6d6" stroke-width="1" transform="rotate(-25 -4 -7)"/><circle cx="7" cy="-2" r="2.800" fill="#d6d6d6"/><circle cx="-2" cy="6" r="6.500" fill="#d6d6d6"/><ellipse cx="-2" cy="6" rx="9" ry="2.500" fill="none" stroke="#444" stroke-width="1.200" transform="rotate(-20 -2 6)"/><path d="M6 6L10 10M10 6L6 10" stroke="#3fc1bf" stroke-width="1"/></svg>
<div class="a" style="left:2px;top:325px;width:24px;height:23px;border:1.500px solid #d6d6d6;border-radius:2px"></div>
<div class="a" style="left:6px;top:331px;width:11px;height:2px;background:#3fc1bf;"></div>
<div class="a" style="left:6px;top:336px;width:8px;height:2px;background:#3fc1bf;"></div>
<svg style="left:-1.0px;top:322.0px" width="32" height="32" viewBox="-16.0 -16.0 32 32"><g transform="rotate(40)"><rect x="-4.500" y="-12" width="9" height="11" fill="#d6d6d6" stroke="#444" stroke-width="1"/><rect x="-6" y="-1" width="12" height="9" fill="#fff" stroke="#444" stroke-width="1"/><path d="M-3 8V4M0 8V4M3 8V4" stroke="#444" stroke-width="1"/></g></svg>
<svg style="left:-2.0px;top:351.0px" width="32" height="32" viewBox="-16.0 -16.0 32 32"><rect x="-2.500" y="-12" width="5" height="5" fill="#3fc1bf"/><rect x="8" y="-2.500" width="5" height="5" fill="#3fc1bf"/><rect x="-12" y="-2" width="4" height="4" fill="none" stroke="#d6d6d6" stroke-width="1.200"/><rect x="-2" y="8" width="4" height="4" fill="none" stroke="#d6d6d6" stroke-width="1.200"/><path d="M-2 3L3-2M-.5-2H3V1.500" fill="none" stroke="#3fc1bf" stroke-width="1.400"/></svg>
<div class="a" style="left:34px;top:159px;width:33px;height:3px;border-top:1px dotted #8a8a8a;border-bottom:1px dotted #8a8a8a"></div>
<div class="a" style="left:78px;top:159px;width:139px;height:3px;border-top:1px dotted #8a8a8a;border-bottom:1px dotted #8a8a8a"></div>
<div class="a" style="left:32px;top:168px;width:41px;height:548px;background:#373737;"></div>
<div class="t" style="top:173.8px;font-size:12.5px;color:#e6e6e6;letter-spacing:-0.124px;left:89px;">Select</div>
<div class="t" style="top:173.8px;font-size:12.5px;color:#e6e6e6;letter-spacing:-0.141px;left:140px;">Display</div>
<div class="t" style="top:191.5px;font-size:11px;color:#5a5e9a;left:208px;">»</div>
<div class="t" style="top:691.5px;font-size:11px;color:#5a5e9a;left:208px;">»</div>
<div class="a" style="left:77px;top:221px;width:19px;height:20px;background:#5b87cf;"></div>
<svg style="left:76.5px;top:221.0px" width="20" height="20" viewBox="-10.0 -10.0 20 20"><circle r="6.500" fill="#d6d6d6"/></svg>
<div class="a" style="left:77px;top:243px;width:19px;height:20px;background:#5b87cf;"></div>
<svg style="left:76.5px;top:243.0px" width="20" height="20" viewBox="-10.0 -10.0 20 20"><circle cx="-2" cy="-2" r="5" fill="none" stroke="#d6d6d6" stroke-width="1.300"/><rect x="-2" y="-2" width="8" height="8" fill="none" stroke="#d6d6d6" stroke-width="1.300"/></svg>
<div class="a" style="left:77px;top:266px;width:19px;height:20px;background:#5b87cf;"></div>
<svg style="left:76.5px;top:266.0px" width="20" height="20" viewBox="-10.0 -10.0 20 20"><path d="M-5-2A5 5 0 1 1 5-2C5 1 2.500 2 2.500 4H-2.500C-2.500 2-5 1-5-2z" fill="#d6d6d6"/><path d="M-2 5.500h4M-1.500 7.500h3" stroke="#d6d6d6" stroke-width="1.200"/></svg>
<div class="a" style="left:77px;top:288px;width:19px;height:20px;background:#5b87cf;"></div>
<svg style="left:76.5px;top:288.0px" width="20" height="20" viewBox="-10.0 -10.0 20 20"><rect x="-8" y="-5" width="12" height="10" rx="1" fill="#d6d6d6"/><path d="M4-1L8-4V4L4 1z" fill="#d6d6d6"/></svg>
<div class="a" style="left:77px;top:310px;width:19px;height:20px;background:#5b87cf;"></div>
<svg style="left:76.5px;top:310.0px" width="20" height="20" viewBox="-10.0 -10.0 20 20"><path d="M-6-7V7H7zM-3.500 0V4.500H1z" fill="#d6d6d6" fill-rule="evenodd"/></svg>
<div class="a" style="left:77px;top:332px;width:19px;height:20px;background:#5b87cf;"></div>
<svg style="left:76.5px;top:332.0px" width="20" height="20" viewBox="-10.0 -10.0 20 20"><path d="M-7-4C-4-6.500-2-1.500 0-4S4-6.500 7-4M-7 0C-4-2.500-2 2.500 0 0S4-2.500 7 0M-7 4C-4 1.500-2 6.500 0 4S4 1.500 7 4" fill="none" stroke="#d6d6d6" stroke-width="1.300"/></svg>
<div class="a" style="left:77px;top:355px;width:19px;height:20px;background:#5b87cf;"></div>
<svg style="left:76.5px;top:355.0px" width="20" height="20" viewBox="-10.0 -10.0 20 20"><rect x="-7.500" y="-7.500" width="15" height="15" fill="none" stroke="#3fc1bf" stroke-width="1.200"/><rect x="-5" y="-5" width="10" height="10" fill="#d6d6d6"/><circle cx="-1" cy="-1" r="3" fill="#444"/><rect x="0" y="0" width="4" height="4" fill="#d6d6d6"/></svg>
<div class="a" style="left:77px;top:377px;width:19px;height:20px;background:#5b87cf;"></div>
<svg style="left:76.5px;top:377.0px" width="20" height="20" viewBox="-10.0 -10.0 20 20"><circle r="7.500" fill="none" stroke="#d6d6d6" stroke-width="1.300"/><path d="M-1.500-5h3V0H4L0 4L-4 0h2.500z" fill="#3fc1bf"/><path d="M-4 5.500h8" stroke="#3fc1bf" stroke-width="1.300"/></svg>
<div class="a" style="left:77px;top:399px;width:19px;height:20px;background:#5b87cf;"></div>
<svg style="left:76.5px;top:399.0px" width="20" height="20" viewBox="-10.0 -10.0 20 20"><path d="M-6-7L-3-7.500L6 5L4.500 7L3 6.500L-6.500-5z" fill="#d6d6d6"/><path d="M3 6L7 8" stroke="#d6d6d6" stroke-width="1"/></svg>
<div class="a" style="left:77px;top:421px;width:19px;height:20px;background:#5b87cf;"></div>
<svg style="left:76.5px;top:421.0px" width="20" height="20" viewBox="-10.0 -10.0 20 20"><rect x="-7" y="-6" width="14" height="4" fill="#d6d6d6"/><rect x="-6" y="-1" width="12" height="8" fill="none" stroke="#d6d6d6" stroke-width="1.400"/><path d="M-2.500 2h5" stroke="#d6d6d6" stroke-width="1.400"/></svg>
<div class="a" style="left:77px;top:444px;width:19px;height:20px;background:#5b87cf;"></div>
<svg style="left:76.5px;top:444.0px" width="20" height="20" viewBox="-10.0 -10.0 20 20"><path d="M0-8V8M-7-4L7 4M-7 4L7-4M-2-7L0-5L2-7M-2 7L0 5L2 7" stroke="#d6d6d6" stroke-width="1.100" fill="none"/><circle r="7.500" fill="none" stroke="#d6d6d6" stroke-width=".8"/></svg>
<div class="a" style="left:77px;top:466px;width:19px;height:20px;background:#5b87cf;"></div>
<svg style="left:76.5px;top:466.0px" width="20" height="20" viewBox="-10.0 -10.0 20 20"><path d="M-8 0C-4-6 4-6 8 0C4 6-4 6-8 0z" fill="#d6d6d6"/><circle r="2.800" fill="#333"/></svg>
<svg style="left:76.5px;top:492.0px" width="20" height="20" viewBox="-10.0 -10.0 20 20"><rect x="-5.500" y="-6.500" width="11" height="13" fill="#d6d6d6"/><path d="M-3-3h6M-3-.5h6M-3 2h4" stroke="#444" stroke-width="1"/></svg>
<svg style="left:76.5px;top:514.5px" width="20" height="20" viewBox="-10.0 -10.0 20 20"><rect x="-6" y="-6.500" width="12" height="13" fill="#d6d6d6"/></svg>
<svg style="left:76.5px;top:537.0px" width="20" height="20" viewBox="-10.0 -10.0 20 20"><rect x="-5.500" y="-6.500" width="11" height="13" fill="none" stroke="#d6d6d6" stroke-width="1.300"/><path d="M-3-3h6M-3-.5h6M-3 2h4" stroke="#d6d6d6" stroke-width="1"/></svg>
<div class="a" style="left:78px;top:561px;width:17px;height:1px;background:#5e5e5e;"></div>
<div class="a" style="left:78px;top:489px;width:17px;height:1px;background:#5e5e5e;"></div>
<svg style="left:76.5px;top:564.0px" width="20" height="20" viewBox="-10.0 -10.0 20 20"><path d="M-7-6H7L1.500 0V6L-1.500 4V0z" fill="#8c8c8c"/><circle cx="4" cy="4" r="2.500" fill="none" stroke="#8c8c8c" stroke-width="1.500"/></svg>
<svg style="left:76.5px;top:585.5px" width="20" height="20" viewBox="-10.0 -10.0 20 20"><path d="M-7-5.500H7L1.500 .5V6L-1.500 6V.5z" fill="#d6d6d6"/></svg>
<svg style="left:76.5px;top:608.5px" width="20" height="20" viewBox="-10.0 -10.0 20 20"><path d="M-6.500 6.500V-4.500H-3.500V-6.500H-1V-4.500H1V-6.500H3.500V-4.500H6.500V6.500z" fill="none" stroke="#d6d6d6" stroke-width="1.200"/></svg>
<div class="a" style="left:98px;top:219px;width:121px;height:18px;background:#444;border:1px solid #5c5c5c"></div>
<div class="t" style="left:100px;top:222px;font-size:11px;color:#e6e6e6;width:118px;overflow:hidden;letter-spacing:-.15px">Name (Sorted Ascending)</div>
<div class="a" style="left:106px;top:246px;width:1px;height:182px;border-left:1px dotted #5a5a5a"></div>
<div class="a" style="left:146px;top:237px;width:73px;height:18px;background:#464646;"></div>
<div class="a" style="left:106px;top:246px;width:8px;height:1px;border-top:1px dotted #5c5c5c"></div>
<svg style="left:113.0px;top:238.0px" width="16" height="16" viewBox="-8.0 -8.0 16 16"><path d="M-6.600 0C-3.500-5 3.500-5 6.600 0C3.500 5-3.500 5-6.600 0z" fill="none" stroke="#d6d6d6" stroke-width="1.700"/><circle r="2.900" fill="#d6d6d6"/><circle cx="-.8" cy="-.8" r="1.100" fill="#444"/></svg>
<svg style="left:128.7px;top:238.0px" width="16" height="16" viewBox="-8.0 -8.0 16 16"><path d="M-5.500-6.500V6.500H6.500zM-3 0V4H.8z" fill="#d6d6d6" fill-rule="evenodd"/></svg>
<div class="t" style="left:149.200px;top:241.6px;font-size:11px;color:#ececec;width:69px;overflow:hidden;letter-spacing:0.272px">ïi×ý×û</div>
<div class="a" style="left:146px;top:255px;width:73px;height:18px;background:#4c4c4c;"></div>
<div class="a" style="left:98px;top:255px;width:48px;height:18px;background:#474747;"></div>
<div class="a" style="left:106px;top:264px;width:8px;height:1px;border-top:1px dotted #5c5c5c"></div>
<svg style="left:113.0px;top:256.0px" width="16" height="16" viewBox="-8.0 -8.0 16 16"><path d="M-6.600 0C-3.500-5 3.500-5 6.600 0C3.500 5-3.500 5-6.600 0z" fill="none" stroke="#d6d6d6" stroke-width="1.700"/><circle r="2.900" fill="#d6d6d6"/><circle cx="-.8" cy="-.8" r="1.100" fill="#444"/></svg>
<svg style="left:128.7px;top:256.0px" width="16" height="16" viewBox="-8.0 -8.0 16 16"><path d="M-5.500-6.500V6.500H6.500zM-3 0V4H.8z" fill="#d6d6d6" fill-rule="evenodd"/></svg>
<div class="t" style="left:149.200px;top:259.6px;font-size:11px;color:#ececec;width:69px;overflow:hidden;letter-spacing:0.279px">×þ×ü</div>
<div class="a" style="left:146px;top:273px;width:73px;height:18px;background:#464646;"></div>
<div class="a" style="left:106px;top:282px;width:8px;height:1px;border-top:1px dotted #5c5c5c"></div>
<svg style="left:113.0px;top:274.0px" width="16" height="16" viewBox="-8.0 -8.0 16 16"><path d="M-6.600 0C-3.500-5 3.500-5 6.600 0C3.500 5-3.500 5-6.600 0z" fill="none" stroke="#d6d6d6" stroke-width="1.700"/><circle r="2.900" fill="#d6d6d6"/><circle cx="-.8" cy="-.8" r="1.100" fill="#444"/></svg>
<svg style="left:128.7px;top:274.0px" width="16" height="16" viewBox="-8.0 -8.0 16 16"><circle cx="-1.500" cy="-1.500" r="4.900" fill="none" stroke="#d6d6d6" stroke-width="1.400"/><rect x="-2" y="-2" width="8.500" height="8.500" fill="#d6d6d6"/><path d="M-2 3.400A4.900 4.900 0 0 0 3.400-2" fill="none" stroke="#444" stroke-width="1.300"/></svg>
<div class="t" style="left:149.200px;top:277.6px;font-size:11px;color:#ececec;width:69px;overflow:hidden;letter-spacing:-0.300px">152 shrub(new)</div>
<div class="a" style="left:146px;top:291px;width:73px;height:18px;background:#4c4c4c;"></div>
<div class="a" style="left:98px;top:291px;width:48px;height:18px;background:#474747;"></div>
<div class="a" style="left:106px;top:300px;width:8px;height:1px;border-top:1px dotted #5c5c5c"></div>
<svg style="left:113.0px;top:292.0px" width="16" height="16" viewBox="-8.0 -8.0 16 16"><path d="M-6.600 0C-3.500-5 3.500-5 6.600 0C3.500 5-3.500 5-6.600 0z" fill="none" stroke="#d6d6d6" stroke-width="1.700"/><circle r="2.900" fill="#d6d6d6"/><circle cx="-.8" cy="-.8" r="1.100" fill="#444"/></svg>
<svg style="left:128.7px;top:292.0px" width="16" height="16" viewBox="-8.0 -8.0 16 16"><path d="M-4.500-2.500A4.500 4.500 0 1 1 4.500-2.500C4.500 .5 2.300 1.500 2.300 3.500H-2.300C-2.300 1.500-4.500 .5-4.500-2.500z" fill="#d6d6d6"/><path d="M-2 5h4M-1.300 6.800h2.600" stroke="#d6d6d6" stroke-width="1.200"/></svg>
<div class="t" style="left:149.200px;top:295.6px;font-size:11px;color:#ececec;width:69px;overflow:hidden;letter-spacing:-0.300px">Corona Sun008</div>
<div class="a" style="left:146px;top:309px;width:73px;height:19px;background:#464646;"></div>
<div class="a" style="left:106px;top:318px;width:8px;height:1px;border-top:1px dotted #5c5c5c"></div>
<svg style="left:113.0px;top:310.5px" width="16" height="16" viewBox="-8.0 -8.0 16 16"><path d="M-6.600 0C-3.500-5 3.500-5 6.600 0C3.500 5-3.500 5-6.600 0z" fill="none" stroke="#d6d6d6" stroke-width="1.700"/><circle r="2.900" fill="#d6d6d6"/><circle cx="-.8" cy="-.8" r="1.100" fill="#444"/></svg>
<svg style="left:128.7px;top:310.5px" width="16" height="16" viewBox="-8.0 -8.0 16 16"><path d="M-4.500-2.500A4.500 4.500 0 1 1 4.500-2.500C4.500 .5 2.300 1.500 2.300 3.500H-2.300C-2.300 1.500-4.500 .5-4.500-2.500z" fill="#d6d6d6"/><path d="M-2 5h4M-1.300 6.800h2.600" stroke="#d6d6d6" stroke-width="1.200"/></svg>
<div class="t" style="left:149.200px;top:314.1px;font-size:11px;color:#ececec;width:69px;overflow:hidden;letter-spacing:-0.300px">Corona Sun008</div>
<div class="a" style="left:146px;top:328px;width:73px;height:18px;background:#4c4c4c;"></div>
<div class="a" style="left:98px;top:328px;width:48px;height:18px;background:#474747;"></div>
<div class="a" style="left:106px;top:337px;width:8px;height:1px;border-top:1px dotted #5c5c5c"></div>
<svg style="left:101.5px;top:331.0px" width="12" height="12" viewBox="-6.0 -6.0 12 12"><path d="M-3.500-5.500L3 0L-3.500 5.500z" fill="#fff"/></svg>
<svg style="left:113.0px;top:329.0px" width="16" height="16" viewBox="-8.0 -8.0 16 16"><path d="M-6.600 0C-3.500-5 3.500-5 6.600 0C3.500 5-3.500 5-6.600 0z" fill="none" stroke="#d6d6d6" stroke-width="1.700"/><circle r="2.900" fill="#d6d6d6"/><circle cx="-.8" cy="-.8" r="1.100" fill="#444"/></svg>
<svg style="left:128.7px;top:329.0px" width="16" height="16" viewBox="-8.0 -8.0 16 16"><rect x="-6.500" y="-6.500" width="13" height="13" fill="none" stroke="#3fc1bf" stroke-width="1.100"/><rect x="-4.500" y="-4.500" width="9" height="9" fill="#d6d6d6"/><circle cx="-1" cy="-1" r="2.600" fill="#444"/><rect x="-.5" y="-.5" width="3.500" height="3.500" fill="#d6d6d6"/></svg>
<div class="t" style="left:149.200px;top:332.6px;font-size:11px;color:#ececec;width:69px;overflow:hidden;letter-spacing:-0.528px">Group006</div>
<div class="a" style="left:146px;top:346px;width:73px;height:18px;background:#3f5a9e;"></div>
<div class="a" style="left:106px;top:355px;width:8px;height:1px;border-top:1px dotted #5c5c5c"></div>
<svg style="left:101.5px;top:349.0px" width="12" height="12" viewBox="-6.0 -6.0 12 12"><path d="M-3.500-5.500L3 0L-3.500 5.500z" fill="#fff"/></svg>
<svg style="left:113.0px;top:347.0px" width="16" height="16" viewBox="-8.0 -8.0 16 16"><path d="M-6.600 0C-3.500-5 3.500-5 6.600 0C3.500 5-3.500 5-6.600 0z" fill="none" stroke="#d6d6d6" stroke-width="1.700"/><circle r="2.900" fill="#d6d6d6"/><circle cx="-.8" cy="-.8" r="1.100" fill="#444"/></svg>
<svg style="left:128.7px;top:347.0px" width="16" height="16" viewBox="-8.0 -8.0 16 16"><rect x="-6.500" y="-6.500" width="13" height="13" fill="none" stroke="#3fc1bf" stroke-width="1.100"/><rect x="-4.500" y="-4.500" width="9" height="9" fill="#d6d6d6"/><circle cx="-1" cy="-1" r="2.600" fill="#444"/><rect x="-.5" y="-.5" width="3.500" height="3.500" fill="#d6d6d6"/></svg>
<div class="t" style="left:149.200px;top:350.6px;font-size:11px;color:#ececec;width:69px;overflow:hidden;letter-spacing:-0.528px">Group010</div>
<div class="a" style="left:146px;top:364px;width:73px;height:18px;background:#4c4c4c;"></div>
<div class="a" style="left:98px;top:364px;width:48px;height:18px;background:#474747;"></div>
<div class="a" style="left:106px;top:373px;width:8px;height:1px;border-top:1px dotted #5c5c5c"></div>
<svg style="left:113.0px;top:365.0px" width="16" height="16" viewBox="-8.0 -8.0 16 16"><path d="M-6.600 0C-3.500-5 3.500-5 6.600 0C3.500 5-3.500 5-6.600 0z" fill="none" stroke="#d6d6d6" stroke-width="1.700"/><circle r="2.900" fill="#d6d6d6"/><circle cx="-.8" cy="-.8" r="1.100" fill="#444"/></svg>
<svg style="left:128.7px;top:365.0px" width="16" height="16" viewBox="-8.0 -8.0 16 16"><circle r="6" fill="#d6d6d6"/></svg>
<div class="t" style="left:149.200px;top:368.6px;font-size:11px;color:#ececec;width:69px;overflow:hidden;letter-spacing:-0.478px">Line002</div>
<div class="a" style="left:146px;top:382px;width:73px;height:18px;background:#464646;"></div>
<div class="a" style="left:106px;top:391px;width:8px;height:1px;border-top:1px dotted #5c5c5c"></div>
<svg style="left:113.0px;top:383.0px" width="16" height="16" viewBox="-8.0 -8.0 16 16"><path d="M-6.600 0C-3.500-5 3.500-5 6.600 0C3.500 5-3.500 5-6.600 0z" fill="none" stroke="#d6d6d6" stroke-width="1.700"/><circle r="2.900" fill="#d6d6d6"/><circle cx="-.8" cy="-.8" r="1.100" fill="#444"/></svg>
<svg style="left:128.7px;top:383.0px" width="16" height="16" viewBox="-8.0 -8.0 16 16"><circle cx="-1.500" cy="-1.500" r="4.900" fill="none" stroke="#d6d6d6" stroke-width="1.400"/><rect x="-2" y="-2" width="8.500" height="8.500" fill="#d6d6d6"/><path d="M-2 3.400A4.900 4.900 0 0 0 3.400-2" fill="none" stroke="#444" stroke-width="1.300"/></svg>
<div class="t" style="left:149.200px;top:386.6px;font-size:11px;color:#ececec;width:69px;overflow:hidden;letter-spacing:-0.535px">Line081</div>
<div class="a" style="left:146px;top:400px;width:73px;height:18px;background:#4c4c4c;"></div>
<div class="a" style="left:98px;top:400px;width:48px;height:18px;background:#474747;"></div>
<div class="a" style="left:106px;top:409px;width:8px;height:1px;border-top:1px dotted #5c5c5c"></div>
<svg style="left:113.0px;top:401.0px" width="16" height="16" viewBox="-8.0 -8.0 16 16"><path d="M-6.600 0C-3.500-5 3.500-5 6.600 0C3.500 5-3.500 5-6.600 0z" fill="none" stroke="#d6d6d6" stroke-width="1.700"/><circle r="2.900" fill="#d6d6d6"/><circle cx="-.8" cy="-.8" r="1.100" fill="#444"/></svg>
<svg style="left:128.7px;top:401.0px" width="16" height="16" viewBox="-8.0 -8.0 16 16"><circle cx="-1.500" cy="-1.500" r="4.900" fill="none" stroke="#d6d6d6" stroke-width="1.400"/><rect x="-2" y="-2" width="8.500" height="8.500" fill="#d6d6d6"/><path d="M-2 3.400A4.900 4.900 0 0 0 3.400-2" fill="none" stroke="#444" stroke-width="1.300"/></svg>
<div class="t" style="left:149.200px;top:404.6px;font-size:11px;color:#ececec;width:69px;overflow:hidden;letter-spacing:-0.478px">Line089</div>
<div class="a" style="left:146px;top:418px;width:73px;height:18px;background:#464646;"></div>
<div class="a" style="left:106px;top:427px;width:8px;height:1px;border-top:1px dotted #5c5c5c"></div>
<svg style="left:113.0px;top:419.0px" width="16" height="16" viewBox="-8.0 -8.0 16 16"><path d="M-6.600 0C-3.500-5 3.500-5 6.600 0C3.500 5-3.500 5-6.600 0z" fill="none" stroke="#d6d6d6" stroke-width="1.700"/><circle r="2.900" fill="#d6d6d6"/><circle cx="-.8" cy="-.8" r="1.100" fill="#444"/></svg>
<svg style="left:128.7px;top:419.0px" width="16" height="16" viewBox="-8.0 -8.0 16 16"><path d="M-5.500-6.500V6.500H6.500zM-3 0V4H.8z" fill="#d6d6d6" fill-rule="evenodd"/></svg>
<div class="t" style="left:149.200px;top:422.6px;font-size:11px;color:#ececec;width:69px;overflow:hidden;letter-spacing:-0.026px">world_root</div>
<div class="a" style="left:98px;top:672px;width:121px;height:18px;background:#f0f0f0;"></div>
<div class="a" style="left:115px;top:679px;width:30px;height:5px;background:#8c8c8c;"></div>
<div class="a" style="left:42px;top:641px;width:19px;height:19px;background:#5c5c5c;border-radius:2px"></div>
<svg style="left:45.5px;top:644.5px" width="12" height="12" viewBox="-6.0 -6.0 12 12"><path d="M-2.500-4L3.500 0L-2.500 4z" fill="#f0f0f0"/></svg>
<div class="a" style="left:35px;top:672px;width:38px;height:44px;background:#5b87cf;border-radius:0 0 2px 2px"></div>
<div class="a" style="left:38px;top:677px;width:33px;height:31px;background:#5c6470;border:1.500px solid #8e9cb4"></div>
<!-- sec_viewport -->
<div class="a" style="left:224px;top:155px;width:1148px;height:567px;background:#444;"></div>
<svg style="left:223px;top:159px" width="1144" height="559" viewBox="223 159 1144 559"><rect x="223" y="159" width="1144" height="559" fill="#000"/><path d="M224 392L339 403.800L735 338.500V718H224z" fill="#8e8c8e"/><path d="M224 389.500L339.300 403.800L328.800 718H224z" fill="#a9a7a9"/><path d="M224 387.300L338 401L735 334.800" fill="none" stroke="#1fe0e6" stroke-width="1.700"/><path d="M1062 316.300L1367 406V718H1062z" fill="#c7bbb0"/><path d="M1339 399L1367 397V406z" fill="#98969a"/><path d="M1062 392.200L1152.600 411.600L1325 396.200" fill="none" stroke="#c8ffff" stroke-width="1.500"/><path d="M1325 396.200L1367 392.400" fill="none" stroke="#1fe0e6" stroke-width="1.700"/><path d="M1304.500 194.500Q1312 191.500 1321 191Q1330 191.500 1337 194.500V216L1321 217L1304.500 216z" fill="#6c6c6c"/><path d="M1290 218.200H1300L1308 219.200M1351 218.200H1341L1333 219.200" fill="none" stroke="#4a4a4a" stroke-width="1"/><text x="1307" y="206.800" font-size="4.800" textLength="11.500" lengthAdjust="spacingAndGlyphs" fill="#585858" font-family="Liberation Sans, sans-serif">FRONT</text><text x="1324.500" y="206.800" font-size="4.800" textLength="9.500" lengthAdjust="spacingAndGlyphs" fill="#585858" font-family="Liberation Sans, sans-serif">RIGHT</text><path d="M244.500 695.500V674" stroke="#3a3ad0" stroke-width="1.200" fill="none"/><path d="M244.500 695.500H262" stroke="#d03a3a" stroke-width="1.200" fill="none"/><path d="M244.500 695.500L258 694" stroke="#3ab03a" stroke-width="1" fill="none"/><text x="244.500" y="673.500" font-size="8.500" font-weight="bold" fill="#2a2ac0" font-family="Liberation Sans, sans-serif">z</text><text x="261" y="696" font-size="9" fill="#d03a3a" font-family="Liberation Sans, sans-serif">x</text><text x="258.500" y="697" font-size="8" fill="#3aa03a" font-family="Liberation Sans, sans-serif">y</text><rect x="224" y="160" width="1142" height="557" fill="none" stroke="#85774a" stroke-width="2"/></svg>
<div class="t" style="top:166.7px;font-size:12px;color:#d8d8d8;letter-spacing:-0.181px;left:228px;">[ + ] [Perspective ] [Standard ] [Default Shading ]</div>
<svg style="left:483.0px;top:165.0px" width="16" height="16" viewBox="-8.0 -8.0 16 16"><path d="M-6.500-5.500H6.500L1.500 .5V6H-1.500V.5z" fill="#8c8c8c"/></svg>
<!-- sec_right -->
<div class="a" style="left:1372px;top:155px;width:200px;height:683px;background:#444;"></div>
<div class="a" style="left:1374px;top:160px;width:198px;height:3px;border-top:1px dotted #8a8a8a;border-bottom:1px dotted #8a8a8a"></div>
<div class="a" style="left:1403px;top:169px;width:169px;height:27px;background:#3a3a3a;"></div>
<div class="a" style="left:1436px;top:172px;width:1px;height:21px;background:#484848;"></div>
<div class="a" style="left:1469px;top:172px;width:1px;height:21px;background:#484848;"></div>
<div class="a" style="left:1502px;top:172px;width:1px;height:21px;background:#484848;"></div>
<div class="a" style="left:1535px;top:172px;width:1px;height:21px;background:#484848;"></div>
<div class="a" style="left:1568px;top:172px;width:1px;height:21px;background:#484848;"></div>
<svg style="left:1375.0px;top:171.0px" width="24" height="24" viewBox="-12.0 -12.0 24 24"><path d="M0-8V8M-8 0H8" stroke="#f0f0f0" stroke-width="2.600"/></svg>
<svg style="left:1408.0px;top:171.0px" width="24" height="24" viewBox="-12.0 -12.0 24 24"><rect x="-7" y="-7" width="14" height="14" fill="none" stroke="#3aa6a4" stroke-width="1.200"/><path d="M-7 7C-6-2 0-7 7-7" fill="none" stroke="#b2b2b2" stroke-width="1.600"/><rect x="-8.8" y="-8.8" width="3.600" height="3.600" fill="#3a3a3a" stroke="#3aa6a4" stroke-width="1"/><rect x="5.2" y="-8.8" width="3.600" height="3.600" fill="#3a3a3a" stroke="#3aa6a4" stroke-width="1"/><rect x="-8.8" y="5.2" width="3.600" height="3.600" fill="#3a3a3a" stroke="#3aa6a4" stroke-width="1"/><rect x="5.2" y="5.2" width="3.600" height="3.600" fill="#3a3a3a" stroke="#3aa6a4" stroke-width="1"/></svg>
<svg style="left:1441.0px;top:171.0px" width="24" height="24" viewBox="-12.0 -12.0 24 24"><rect x="-5.500" y="-8.500" width="11" height="5.500" fill="#b2b2b2"/><path d="M0-3V1M-5.500 4V1H5.500V4" fill="none" stroke="#3aa6a4" stroke-width="1.300"/><rect x="-8" y="4" width="5" height="4.500" fill="#3aa6a4"/><rect x="3" y="4" width="5" height="4.500" fill="#3aa6a4"/></svg>
<svg style="left:1474.0px;top:171.0px" width="24" height="24" viewBox="-12.0 -12.0 24 24"><circle cx="-3" r="6.300" fill="none" stroke="#3aa6a4" stroke-width="1.100"/><circle cx="-1" r="6.300" fill="none" stroke="#3aa6a4" stroke-width="1.100"/><circle cx="2.500" r="6.500" fill="#b2b2b2"/></svg>
<svg style="left:1506.0px;top:171.0px" width="24" height="24" viewBox="-12.0 -12.0 24 24"><rect x="-8" y="-7" width="16" height="10.500" fill="#b2b2b2"/><path d="M0 3.500V6.500M-4 7H4" stroke="#b2b2b2" stroke-width="1.700"/></svg>
<svg style="left:1539.0px;top:171.0px" width="24" height="24" viewBox="-12.0 -12.0 24 24"><path d="M-7.500-4.500A4 4 0 0 1-2-8L-4.500-5.500L-3-3L-.5-4.500L1-6.500A4 4 0 0 1-2.500-1L7 7.500A1.500 1.500 0 0 1 5 9.500L-4 .5A4 4 0 0 1-7.500-4.500z" fill="#b2b2b2"/></svg>
<div class="a" style="left:1398px;top:201px;width:23px;height:23px;background:#5b87cf;border-radius:2px"></div>
<svg style="left:1375.0px;top:203.0px" width="20" height="20" viewBox="-10.0 -10.0 20 20"><circle r="6.500" fill="#d6d6d6"/></svg>
<svg style="left:1399.5px;top:203.0px" width="20" height="20" viewBox="-10.0 -10.0 20 20"><circle cx="-2" cy="-2" r="5.500" fill="none" stroke="#e8e8e8" stroke-width="1.300"/><rect x="-2" y="-2" width="9" height="9" fill="#e8e8e8"/><path d="M-2 3.500A5.500 5.500 0 0 0 3.500-2" fill="none" stroke="#5b87cf" stroke-width="1.300"/></svg>
<svg style="left:1424.0px;top:203.0px" width="20" height="20" viewBox="-10.0 -10.0 20 20"><path d="M-4.500-2.500A4.500 4.500 0 1 1 4.500-2.500C4.500 .5 2.300 1.500 2.300 3.500H-2.300C-2.300 1.500-4.500 .5-4.500-2.500z" fill="#d6d6d6"/><path d="M-2 5h4M-1.300 6.800h2.600" stroke="#d6d6d6" stroke-width="1.200"/></svg>
<svg style="left:1449.0px;top:203.0px" width="20" height="20" viewBox="-10.0 -10.0 20 20"><rect x="-8" y="-5" width="11.500" height="10" rx="1" fill="#d6d6d6"/><path d="M3.500-1L8-4.500V4.500L3.500 1z" fill="#d6d6d6"/></svg>
<svg style="left:1473.0px;top:203.0px" width="20" height="20" viewBox="-10.0 -10.0 20 20"><path d="M-6-7V6.500H7zM-3.500 0V4H.5z" fill="#d6d6d6" fill-rule="evenodd"/></svg>
<svg style="left:1498.0px;top:203.0px" width="20" height="20" viewBox="-10.0 -10.0 20 20"><path d="M-7.500-4.500C-4-7-2-2 0-4.500S4-7 7.500-4.500M-7.500 0C-4-2.500-2 2.500 0 0S4-2.500 7.500 0M-7.500 4.500C-4 2-2 7 0 4.500S4 2 7.500 4.500" fill="none" stroke="#d6d6d6" stroke-width="1.800"/></svg>
<svg style="left:1523.0px;top:203.0px" width="20" height="20" viewBox="-10.0 -10.0 20 20"><circle cx="-4" cy="-4" r="2.300" fill="none" stroke="#d6d6d6" stroke-width="1.500"/><circle cx="2.500" cy="2.500" r="3.300" fill="none" stroke="#d6d6d6" stroke-width="1.800"/><circle cx="2.500" cy="2.500" r="5.200" fill="none" stroke="#d6d6d6" stroke-width="1.600" stroke-dasharray="1.800 1.500"/></svg>
<div class="a" style="left:1374px;top:230px;width:198px;height:20px;background:#646464;"></div>
<div class="t" style="top:235.0px;font-size:11px;color:#e0e0e0;letter-spacing:-0.383px;left:1379.8px;">Splines</div>
<svg style="left:1556.0px;top:235.0px" width="10" height="10" viewBox="-5.0 -5.0 10 10"><path d="M-3.500-2.200h7L0 2.600z" fill="#e8e8e8"/></svg>
<div class="a" style="left:1566px;top:255px;width:6px;height:583px;background:#404040;"></div>
<div class="a" style="left:1374px;top:256px;width:190px;height:245px;background:#515151;border-radius:2px"></div>
<svg style="left:1378.0px;top:259.5px" width="10" height="10" viewBox="-5.0 -5.0 10 10"><path d="M-3.500-2.200h7L0 2.800z" fill="#c8c8c8"/></svg>
<div class="t" style="top:259.8px;font-size:11.5px;color:#f0f0f0;font-weight:bold;letter-spacing:-0.178px;left:1392.5px;">Object Type</div>
<svg style="left:1550px;top:261px" width="8" height="8" viewBox="0 0 8 8"><rect x="0.0" y="0.0" width="1.200" height="1.200" fill="#707070"/><rect x="0.0" y="2.5" width="1.200" height="1.200" fill="#707070"/><rect x="0.0" y="5.0" width="1.200" height="1.200" fill="#707070"/><rect x="2.5" y="0.0" width="1.200" height="1.200" fill="#707070"/><rect x="2.5" y="2.5" width="1.200" height="1.200" fill="#707070"/><rect x="2.5" y="5.0" width="1.200" height="1.200" fill="#707070"/><rect x="5.0" y="0.0" width="1.200" height="1.200" fill="#707070"/><rect x="5.0" y="2.5" width="1.200" height="1.200" fill="#707070"/><rect x="5.0" y="5.0" width="1.200" height="1.200" fill="#707070"/></svg>
<div class="a" style="left:1415px;top:282px;width:11px;height:11px;background:#5b5b5b"></div>
<div class="t" style="top:282.8px;font-size:10.5px;color:#8a8a8a;left:1431.5px;">AutoGrid</div>
<div class="a" style="left:1415px;top:307px;width:11px;height:11px;background:#686868"></div>
<svg style="left:1414.5px;top:306.5px" width="12" height="12" viewBox="-6.0 -6.0 12 12"><path d="M-3.500 0L-1 3L3.500-3.500" fill="none" stroke="#fff" stroke-width="1.800"/></svg>
<div class="a" style="left:1432px;top:304.5px;width:91px;height:16.0px;background:#4a5f86;border-radius:2px"></div>
<div class="t" style="top:307.2px;font-size:10.5px;color:#7f94b2;left:1327.50px;width:300px;text-align:center;">Start New Shape</div>
<div class="a" style="left:1379px;top:328px;width:87px;height:19px;background:#626262;border-radius:3.500px"></div>
<div class="t" style="top:332.2px;font-size:10.5px;color:#e0e0e0;left:1272.50px;width:300px;text-align:center;">Line</div>
<div class="a" style="left:1471px;top:328px;width:87px;height:19px;background:#626262;border-radius:3.500px"></div>
<div class="t" style="top:332.2px;font-size:10.5px;color:#e0e0e0;left:1364.50px;width:300px;text-align:center;">Rectangle</div>
<div class="a" style="left:1379px;top:353px;width:87px;height:19px;background:#626262;border-radius:3.500px"></div>
<div class="t" style="top:356.9px;font-size:10.5px;color:#e0e0e0;left:1272.50px;width:300px;text-align:center;">Circle</div>
<div class="a" style="left:1471px;top:353px;width:87px;height:19px;background:#626262;border-radius:3.500px"></div>
<div class="t" style="top:356.9px;font-size:10.5px;color:#e0e0e0;left:1364.50px;width:300px;text-align:center;">Ellipse</div>
<div class="a" style="left:1379px;top:377px;width:87px;height:19px;background:#626262;border-radius:3.500px"></div>
<div class="t" style="top:381.6px;font-size:10.5px;color:#e0e0e0;left:1272.50px;width:300px;text-align:center;">Arc</div>
<div class="a" style="left:1471px;top:377px;width:87px;height:19px;background:#626262;border-radius:3.500px"></div>
<div class="t" style="top:381.6px;font-size:10.5px;color:#e0e0e0;left:1364.50px;width:300px;text-align:center;">Donut</div>
<div class="a" style="left:1379px;top:402px;width:87px;height:19px;background:#626262;border-radius:3.500px"></div>
<div class="t" style="top:406.2px;font-size:10.5px;color:#e0e0e0;left:1272.50px;width:300px;text-align:center;">NGon</div>
<div class="a" style="left:1471px;top:402px;width:87px;height:19px;background:#626262;border-radius:3.500px"></div>
<div class="t" style="top:406.2px;font-size:10.5px;color:#e0e0e0;left:1364.50px;width:300px;text-align:center;">Star</div>
<div class="a" style="left:1379px;top:427px;width:87px;height:19px;background:#626262;border-radius:3.500px"></div>
<div class="t" style="top:430.9px;font-size:10.5px;color:#e0e0e0;left:1272.50px;width:300px;text-align:center;">Text</div>
<div class="a" style="left:1471px;top:427px;width:87px;height:19px;background:#626262;border-radius:3.500px"></div>
<div class="t" style="top:430.9px;font-size:10.5px;color:#e0e0e0;left:1364.50px;width:300px;text-align:center;">Helix</div>
<div class="a" style="left:1379px;top:451px;width:87px;height:19px;background:#626262;border-radius:3.500px"></div>
<div class="t" style="top:455.5px;font-size:10.5px;color:#e0e0e0;left:1272.50px;width:300px;text-align:center;">Egg</div>
<div class="a" style="left:1471px;top:451px;width:87px;height:19px;background:#626262;border-radius:3.500px"></div>
<div class="t" style="top:455.5px;font-size:10.5px;color:#e0e0e0;left:1364.50px;width:300px;text-align:center;">Section</div>
<div class="a" style="left:1379px;top:476px;width:87px;height:19px;background:#626262;border-radius:3.500px"></div>
<div class="t" style="top:480.1px;font-size:10.5px;color:#e0e0e0;left:1272.50px;width:300px;text-align:center;">Freehand</div>
<div class="a" style="left:1374px;top:505px;width:190px;height:48px;background:#515151;border-radius:2px"></div>
<svg style="left:1378.0px;top:509.0px" width="10" height="10" viewBox="-5.0 -5.0 10 10"><path d="M-3.500-2.200h7L0 2.800z" fill="#c8c8c8"/></svg>
<div class="t" style="top:508.8px;font-size:11.5px;color:#f0f0f0;font-weight:bold;letter-spacing:-0.370px;left:1392.5px;">Name and Color</div>
<svg style="left:1550px;top:510.5px" width="8" height="8" viewBox="0 0 8 8"><rect x="0.0" y="0.0" width="1.200" height="1.200" fill="#707070"/><rect x="0.0" y="2.5" width="1.200" height="1.200" fill="#707070"/><rect x="0.0" y="5.0" width="1.200" height="1.200" fill="#707070"/><rect x="2.5" y="0.0" width="1.200" height="1.200" fill="#707070"/><rect x="2.5" y="2.5" width="1.200" height="1.200" fill="#707070"/><rect x="2.5" y="5.0" width="1.200" height="1.200" fill="#707070"/><rect x="5.0" y="0.0" width="1.200" height="1.200" fill="#707070"/><rect x="5.0" y="2.5" width="1.200" height="1.200" fill="#707070"/><rect x="5.0" y="5.0" width="1.200" height="1.200" fill="#707070"/></svg>
<div class="a" style="left:1379px;top:527px;width:154px;height:20px;background:#646464;"></div>
<div class="t" style="top:532.2px;font-size:10.5px;color:#e8e8e8;left:1384px;">Box001</div>
<div class="a" style="left:1538px;top:527px;width:20px;height:20px;background:#d2cefa;border:1.500px solid #f4f4f4"></div>
<!-- sec_bottom -->
<div class="a" style="left:0px;top:718px;width:1372px;height:120px;background:#444;"></div>
<div class="a" style="left:33px;top:724px;width:3px;height:57px;border-left:1px dotted #8a8a8a;border-right:1px dotted #8a8a8a"></div>
<div class="a" style="left:41px;top:724px;width:15px;height:16px;background:#5c5c5c;border-radius:3px"></div>
<div class="t" style="top:726.5px;font-size:11px;color:#d0d0d0;left:-101.50px;width:300px;text-align:center;">&lt;</div>
<div class="a" style="left:58px;top:724px;width:126px;height:16px;background:#5c5c5c;border-radius:3px"></div>
<div class="t" style="top:727.2px;font-size:10.5px;color:#e0e0e0;left:-29.00px;width:300px;text-align:center;">0 / 100</div>
<div class="a" style="left:186px;top:724px;width:15px;height:16px;background:#5c5c5c;border-radius:3px"></div>
<div class="t" style="top:726.5px;font-size:11px;color:#d0d0d0;left:43.50px;width:300px;text-align:center;">&gt;</div>
<div class="a" style="left:41px;top:745px;width:1531px;height:1px;background:#1e1e1e;"></div>
<div class="a" style="left:92px;top:746px;width:1432px;height:24px;background:#292929;"></div>
<div class="a" style="left:92px;top:770px;width:1432px;height:12px;background:#2b2b2b;"></div>
<svg style="left:51.0px;top:747.0px" width="20" height="20" viewBox="-10.0 -10.0 20 20"><path d="M-7-4h3M-7-1.500h3M-7 1h3M-7 3.500h3" stroke="#d6d6d6" stroke-width="1"/><path d="M-3 0C-1-6 1-6 3 0S7 6 8-1" fill="none" stroke="#3fc1bf" stroke-width="1.200"/></svg>
<svg style="left:0;top:0" width="1572" height="838" viewBox="0 0 1572 838"><path d="M97.3 746V756M97.3 756V758M97.3 768V770M111.5 746V756M125.7 746V756M139.9 746V756M154.2 746V756M168.4 746V756M168.4 756V758M168.4 768V770M182.6 746V756M196.8 746V756M211.0 746V756M225.2 746V756M239.4 746V756M239.4 756V758M239.4 768V770M253.6 746V756M267.9 746V756M282.1 746V756M296.3 746V756M310.5 746V756M310.5 756V758M310.5 768V770M324.7 746V756M338.9 746V756M353.1 746V756M367.3 746V756M381.6 746V756M381.6 756V758M381.6 768V770M395.8 746V756M410.0 746V756M424.2 746V756M438.4 746V756M452.6 746V756M452.6 756V758M452.6 768V770M466.8 746V756M481.1 746V756M495.3 746V756M509.5 746V756M523.7 746V756M523.7 756V758M523.7 768V770M537.9 746V756M552.1 746V756M566.3 746V756M580.5 746V756M594.8 746V756M594.8 756V758M594.8 768V770M609.0 746V756M623.2 746V756M637.4 746V756M651.6 746V756M665.8 746V756M665.8 756V758M665.8 768V770M680.0 746V756M694.2 746V756M708.5 746V756M722.7 746V756M736.9 746V756M736.9 756V758M736.9 768V770M751.1 746V756M765.3 746V756M779.5 746V756M793.7 746V756M807.9 746V756M807.9 756V758M807.9 768V770M822.2 746V756M836.4 746V756M850.6 746V756M864.8 746V756M879.0 746V756M879.0 756V758M879.0 768V770M893.2 746V756M907.4 746V756M921.7 746V756M935.9 746V756M950.1 746V756M950.1 756V758M950.1 768V770M964.3 746V756M978.5 746V756M992.7 746V756M1006.9 746V756M1021.1 746V756M1021.1 756V758M1021.1 768V770M1035.4 746V756M1049.6 746V756M1063.8 746V756M1078.0 746V756M1092.2 746V756M1092.2 756V758M1092.2 768V770M1106.4 746V756M1120.6 746V756M1134.8 746V756M1149.1 746V756M1163.3 746V756M1163.3 756V758M1163.3 768V770M1177.5 746V756M1191.7 746V756M1205.9 746V756M1220.1 746V756M1234.3 746V756M1234.3 756V758M1234.3 768V770M1248.6 746V756M1262.8 746V756M1277.0 746V756M1291.2 746V756M1305.4 746V756M1305.4 756V758M1305.4 768V770M1319.6 746V756M1333.8 746V756M1348.0 746V756M1362.3 746V756M1376.5 746V756M1376.5 756V758M1376.5 768V770M1390.7 746V756M1404.9 746V756M1419.1 746V756M1433.3 746V756M1447.5 746V756M1447.5 756V758M1447.5 768V770M1461.7 746V756M1476.0 746V756M1490.2 746V756M1504.4 746V756M1518.6 746V756M1518.6 756V758M1518.6 768V770" stroke="#707070" stroke-width="1" fill="none" shape-rendering="crispEdges"/></svg>
<div class="a" style="left:94px;top:747px;width:7px;height:23px;background:#a39528;"></div>
<div class="a" style="left:97px;top:747px;width:1px;height:23px;background:#c8b840;"></div>
<div class="t" style="top:759.0px;font-size:10px;color:#d8cc70;left:-52.50px;width:300px;text-align:center;">0</div>
<div class="t" style="top:758.2px;font-size:10.5px;color:#c4c4c4;left:18.37px;width:300px;text-align:center;">5</div>
<div class="t" style="top:758.2px;font-size:10.5px;color:#c4c4c4;left:89.43px;width:300px;text-align:center;">10</div>
<div class="t" style="top:758.2px;font-size:10.5px;color:#c4c4c4;left:160.50px;width:300px;text-align:center;">15</div>
<div class="t" style="top:758.2px;font-size:10.5px;color:#c4c4c4;left:231.56px;width:300px;text-align:center;">20</div>
<div class="t" style="top:758.2px;font-size:10.5px;color:#c4c4c4;left:302.62px;width:300px;text-align:center;">25</div>
<div class="t" style="top:758.2px;font-size:10.5px;color:#c4c4c4;left:373.69px;width:300px;text-align:center;">30</div>
<div class="t" style="top:758.2px;font-size:10.5px;color:#c4c4c4;left:444.75px;width:300px;text-align:center;">35</div>
<div class="t" style="top:758.2px;font-size:10.5px;color:#c4c4c4;left:515.82px;width:300px;text-align:center;">40</div>
<div class="t" style="top:758.2px;font-size:10.5px;color:#c4c4c4;left:586.88px;width:300px;text-align:center;">45</div>
<div class="t" style="top:758.2px;font-size:10.5px;color:#c4c4c4;left:657.95px;width:300px;text-align:center;">50</div>
<div class="t" style="top:758.2px;font-size:10.5px;color:#c4c4c4;left:729.01px;width:300px;text-align:center;">55</div>
<div class="t" style="top:758.2px;font-size:10.5px;color:#c4c4c4;left:800.08px;width:300px;text-align:center;">60</div>
<div class="t" style="top:758.2px;font-size:10.5px;color:#c4c4c4;left:871.14px;width:300px;text-align:center;">65</div>
<div class="t" style="top:758.2px;font-size:10.5px;color:#c4c4c4;left:942.21px;width:300px;text-align:center;">70</div>
<div class="t" style="top:758.2px;font-size:10.5px;color:#c4c4c4;left:1013.27px;width:300px;text-align:center;">75</div>
<div class="t" style="top:758.2px;font-size:10.5px;color:#c4c4c4;left:1084.34px;width:300px;text-align:center;">80</div>
<div class="t" style="top:758.2px;font-size:10.5px;color:#c4c4c4;left:1155.40px;width:300px;text-align:center;">85</div>
<div class="t" style="top:758.2px;font-size:10.5px;color:#c4c4c4;left:1226.47px;width:300px;text-align:center;">90</div>
<div class="t" style="top:758.2px;font-size:10.5px;color:#c4c4c4;left:1297.53px;width:300px;text-align:center;">95</div>
<div class="t" style="top:758.2px;font-size:10.5px;color:#c4c4c4;left:1368.60px;width:300px;text-align:center;">100</div>
<div class="a" style="left:1px;top:788px;width:100px;height:23px;background:#e6c6ca;border-right:2px solid #f2e6e8;border-top:1px solid #d8b8bc"></div>
<div class="a" style="left:1px;top:812px;width:100px;height:26px;background:#f0f0f0;"></div>
<div class="a" style="left:105px;top:786px;width:1px;height:27px;background:#2a2a2a;"></div>
<div class="t" style="top:794.2px;font-size:10.5px;color:#e8e8e8;letter-spacing:0.065px;left:110px;">1 Object Selected</div>
<div class="a" style="left:4px;top:812px;width:149px;height:30px;background:#f4f4f4;border-radius:9px;box-shadow:0 0 2px rgba(0,0,0,.5)"></div>
<div class="a" style="left:30px;top:820px;width:7px;height:7px;border:1px solid #999;border-radius:1.500px"></div>
<div class="a" style="left:28px;top:822px;width:7px;height:7px;border:1px solid #999;border-radius:1.500px;background:#f4f4f4"></div>
<div class="a" style="left:13px;top:816px;width:15px;height:17px;background:#2a9cc4;border-radius:2px"></div>
<div class="a" style="left:13px;top:829px;width:15px;height:4px;background:#12607e;border-radius:0 0 2px 2px"></div>
<div class="t" style="top:817.0px;font-size:10px;color:#fff;left:-129.50px;width:300px;text-align:center;font-weight:bold;">3</div>
<div class="a" style="left:75px;top:821px;width:10px;height:10px;border:1px solid #666;border-radius:1px"></div>
<svg style="left:122.5px;top:820.0px" width="12" height="12" viewBox="-6.0 -6.0 12 12"><path d="M-4.500-4.500L4.500 4.500M4.500-4.500L-4.500 4.500" stroke="#666" stroke-width="1" fill="none"/></svg>
<div class="t" style="top:819.5px;font-size:11px;color:#e0e0e0;left:155.5px;">d</div>
<div class="a" style="left:161px;top:811px;width:163px;height:27px;background:#3a3a3a;"></div>
<svg style="left:164.7px;top:816.5px" width="24" height="24" viewBox="-12.0 -12.0 24 24"><circle r="8.600" fill="none" stroke="#606060" stroke-width="4.400"/><circle r="6.400" fill="#343434"/></svg>
<div class="t" style="left:194.500px;top:823.500px;font-size:14px;color:#e2e2e2;width:129.500px;overflow:hidden;letter-spacing:-.670px">XS MATERIAL PRESET</div>
<svg style="left:665.0px;top:789.0px" width="20" height="20" viewBox="-10.0 -10.0 20 20"><path d="M-8-4V-8H-4M4-8H8V-4M-8 4V8H-4M8 4V8H4" fill="none" stroke="#d6d6d6" stroke-width="1.300"/><rect x="-3.500" y="-4" width="6" height="4" fill="#3fc1bf"/><path d="M-4 2L0 0L2 6L4 4" fill="#d6d6d6"/></svg>
<svg style="left:691.0px;top:789.0px" width="20" height="20" viewBox="-10.0 -10.0 20 20"><rect x="-4.500" y="-1" width="9" height="8" rx="1" fill="#d6d6d6"/><path d="M-2.800-1V-4A2.800 2.800 0 0 1 2.800-4V-1" fill="none" stroke="#d6d6d6" stroke-width="1.600"/><circle cy="3" r="1.200" fill="#444"/></svg>
<svg style="left:719.0px;top:789.0px" width="20" height="20" viewBox="-10.0 -10.0 20 20"><rect x="-6.500" y="-6.500" width="13" height="13" fill="none" stroke="#d6d6d6" stroke-width="1.400"/><path d="M0-4L4 0L0 4L-4 0z" fill="none" stroke="#d6d6d6" stroke-width="1.300"/><path d="M0-6.500V-4M0 6.500V4M-6.500 0H-4M6.500 0H4" stroke="#d6d6d6" stroke-width="1.300"/></svg>
<div class="t" style="top:794.5px;font-size:11px;color:#e0e0e0;left:1062px;">n</div>
<svg style="left:1113.0px;top:788.5px" width="20" height="20" viewBox="-10.0 -10.0 20 20"><path d="M-7-5.500V5.500" stroke="#d6d6d6" stroke-width="1.800"/><path d="M-5 0L1-4.500V4.500zM1 0L7-4.500V4.500z" fill="#d6d6d6"/></svg>
<div class="a" style="left:1135px;top:790px;width:1px;height:18px;background:#2c2c2c;"></div>
<svg style="left:1139.0px;top:788.5px" width="20" height="20" viewBox="-10.0 -10.0 20 20"><path d="M-7 0L0-5V5z" fill="#d6d6d6"/><path d="M2-5V5M5.500-5V5" stroke="#d6d6d6" stroke-width="2"/></svg>
<svg style="left:1161.0px;top:788.5px" width="20" height="20" viewBox="-10.0 -10.0 20 20"><path d="M-5-8L7 0L-5 8z" fill="#f0f0f0"/></svg>
<svg style="left:1178px;top:805px" width="4" height="4" viewBox="0 0 4 4"><path d="M4 0V4H0z" fill="#d8d8d8"/></svg>
<svg style="left:1183.5px;top:788.5px" width="20" height="20" viewBox="-10.0 -10.0 20 20"><path d="M7 0L0-5V5z" fill="#d6d6d6"/><path d="M-2-5V5M-5.500-5V5" stroke="#d6d6d6" stroke-width="2"/></svg>
<div class="a" style="left:1207px;top:790px;width:1px;height:18px;background:#2c2c2c;"></div>
<svg style="left:1209.5px;top:788.5px" width="20" height="20" viewBox="-10.0 -10.0 20 20"><path d="M7-5.500V5.500" stroke="#d6d6d6" stroke-width="1.800"/><path d="M5 0L-1-4.500V4.500zM-1 0L-7-4.500V4.500z" fill="#d6d6d6"/></svg>
<svg style="left:1114.0px;top:812.5px" width="16" height="16" viewBox="-8.0 -8.0 16 16"><path d="M-6 0L-1-4V4zM6 0L1-4V4z" fill="#d6d6d6"/></svg>
<div class="a" style="left:1135px;top:812px;width:1px;height:17px;background:#2c2c2c;"></div>
<div class="a" style="left:1138px;top:812px;width:70px;height:17px;background:#5c5c5c;"></div>
<div class="t" style="top:815.8px;font-size:10.5px;color:#e0e0e0;left:1141px;">0</div>
<svg style="left:1193.5px;top:814.5px" width="12" height="12" viewBox="-6.0 -6.0 12 12"><path d="M-2.500-1.500L0-5L2.500-1.500zM-2.500 1.500L0 5L2.500 1.500z" fill="#dcdcdc"/></svg>
<div class="a" style="left:1209px;top:812px;width:1px;height:17px;background:#2c2c2c;"></div>
<svg style="left:1212.0px;top:810.5px" width="20" height="20" viewBox="-10.0 -10.0 20 20"><circle cx="-1.500" cy="-1.500" r="6" fill="#d6d6d6"/><path d="M-1.500-5V-1.500H2" fill="none" stroke="#444" stroke-width="1.300"/><circle cx="3.500" cy="4" r="3.600" fill="#f8b020" stroke="#444" stroke-width=".8"/><circle cx="3.500" cy="4" r="1.300" fill="#444"/></svg>
<div class="a" style="left:1246px;top:789px;width:43px;height:44px;background:#5e5e5e;border-radius:4px"></div>
<svg style="left:1249.0px;top:793.0px" width="32" height="32" viewBox="-16.0 -16.0 32 32"><path d="M.8-12.500V11.500M-11.200-.5H12.800" stroke="#dadada" stroke-width="5"/><g transform="translate(7.500,9) rotate(-40)"><circle cx="-3.500" r="3.200" fill="#5e5e5e" stroke="#3fc1bf" stroke-width="2"/><path d="M0 0H9M5.500 0V3.500M8.500 0V3" stroke="#3fc1bf" stroke-width="2" fill="none"/></g></svg>
<div class="a" style="left:1293px;top:789px;width:48px;height:20px;background:#5e5e5e;border-radius:3px"></div>
<div class="t" style="top:793.8px;font-size:10.5px;color:#e0e0e0;left:1167.00px;width:300px;text-align:center;">Auto</div>
<div class="a" style="left:1293px;top:812px;width:48px;height:19px;background:#5e5e5e;border-radius:3px"></div>
<div class="t" style="top:816.8px;font-size:10.5px;color:#e0e0e0;left:1167.00px;width:300px;text-align:center;">Set K.</div>
<div class="a" style="left:1345px;top:789px;width:117px;height:17px;background:#5e5e5e;"></div>
<div class="t" style="top:792.2px;font-size:10.5px;color:#e0e0e0;left:1350px;">Selected</div>
<svg style="left:1446.0px;top:792.5px" width="10" height="10" viewBox="-5.0 -5.0 10 10"><path d="M-3.500-2.200h7L0 2.600z" fill="#e8e8e8"/></svg>
<svg style="left:1347.0px;top:811.0px" width="20" height="20" viewBox="-10.0 -10.0 20 20"><path d="M-6 8C-6 0-3-2-3-6M6 8C6 0 3-2 3-6" fill="none" stroke="#3fc1bf" stroke-width="1.600"/><rect x="-2" y="-9" width="4" height="4" fill="none" stroke="#d6d6d6" stroke-width="1"/><path d="M-6.500-8.500h2M4.500-8.500h2" stroke="#d6d6d6" stroke-width="1.200"/></svg>
<svg style="left:1363px;top:829px" width="4" height="4" viewBox="0 0 4 4"><path d="M4 0V4H0z" fill="#d8d8d8"/></svg>
<div class="a" style="left:1370px;top:812px;width:91px;height:19px;background:#5e5e5e;border-radius:3px"></div>
<div class="t" style="top:816.8px;font-size:10.5px;color:#e0e0e0;left:1265.50px;width:300px;text-align:center;">Filters...</div>
<svg style="left:1473.0px;top:788.0px" width="20" height="20" viewBox="-10.0 -10.0 20 20"><circle cx="1.500" cy="-1.500" r="5" fill="none" stroke="#d6d6d6" stroke-width="1.800"/><path d="M-2 2L-7 7" stroke="#d6d6d6" stroke-width="2.200"/></svg>
<svg style="left:1496.0px;top:788.0px" width="20" height="20" viewBox="-10.0 -10.0 20 20"><circle cx="-1" cy="1" r="4" fill="none" stroke="#d6d6d6" stroke-width="1.500"/><path d="M-4 4L-8 8" stroke="#d6d6d6" stroke-width="2"/><rect x="0" y="-8" width="4" height="3.500" fill="#3fc1bf"/><rect x="5" y="-8" width="3.500" height="3.500" fill="#3fc1bf"/><rect x="5" y="-3.500" width="3.500" height="3.500" fill="#3fc1bf"/></svg>
<svg style="left:1519.0px;top:788.0px" width="20" height="20" viewBox="-10.0 -10.0 20 20"><path d="M-8-4V-8H-4M4-8H8V-4M-8 4V8H-4M8 4V8H4" fill="none" stroke="#d6d6d6" stroke-width="1.200"/><path d="M0-5L6-2.500V3L0 6L-6 3V-2.500z" fill="#3fc1bf"/><path d="M-6-2.500L0 0L6-2.500M0 0V6" stroke="#2a8a88" stroke-width=".8" fill="none"/></svg>
<svg style="left:1543.0px;top:788.0px" width="20" height="20" viewBox="-10.0 -10.0 20 20"><path d="M3-8L7-6V0L3 2L-1 0V-6z" fill="#3fc1bf"/><path d="M-8 3L-4 0L0 3L-4 6zM-3 7L1 4L5 7L1 10z" fill="#d6d6d6"/></svg>
<svg style="left:1473.0px;top:811.0px" width="20" height="20" viewBox="-10.0 -10.0 20 20"><path d="M-6-6L7 0L-6 6" fill="none" stroke="#d6d6d6" stroke-width="1.600"/><path d="M-3-7A8 8 0 0 1-3 7" fill="none" stroke="#d6d6d6" stroke-width="1"/></svg>
<svg style="left:1496.0px;top:811.0px" width="20" height="20" viewBox="-10.0 -10.0 20 20"><path d="M-5 8C-8 4-9 0-8-1C-7-2-5 0-4 2V-6C-4-8-2-8-2-6V-8C-2-10 0-10 0-8V-7C0-9 2.500-9 2.500-7V-5C2.500-7 5-7 5-5V3C5 5 4 7 3 8z" fill="#d6d6d6"/></svg>
<svg style="left:1519.0px;top:811.0px" width="20" height="20" viewBox="-10.0 -10.0 20 20"><circle r="6" fill="#d6d6d6"/><path d="M0-6A6 6 0 0 1 6 0H0z" fill="#3fc1bf"/><ellipse rx="9.500" ry="3" fill="none" stroke="#d6d6d6" stroke-width="1.100" transform="rotate(-25)"/></svg>
<svg style="left:1543.0px;top:811.0px" width="20" height="20" viewBox="-10.0 -10.0 20 20"><rect x="-7" y="-7" width="14" height="14" fill="none" stroke="#d6d6d6" stroke-width="1.500"/><rect x="-7" y="0" width="7" height="7" fill="#d6d6d6"/><path d="M0 0L5-5M1.500-5.500H5.500V-1.500" stroke="#d6d6d6" stroke-width="1.600" fill="none"/></svg>
<svg style="left:1537px;top:806px" width="3" height="3" viewBox="0 0 4 4"><path d="M4 0V4H0z" fill="#d8d8d8"/></svg>
<svg style="left:1560px;top:806px" width="3" height="3" viewBox="0 0 4 4"><path d="M4 0V4H0z" fill="#d8d8d8"/></svg>
<svg style="left:1490px;top:829px" width="3" height="3" viewBox="0 0 4 4"><path d="M4 0V4H0z" fill="#d8d8d8"/></svg>
<svg style="left:1513px;top:829px" width="3" height="3" viewBox="0 0 4 4"><path d="M4 0V4H0z" fill="#d8d8d8"/></svg>
<svg style="left:1537px;top:829px" width="3" height="3" viewBox="0 0 4 4"><path d="M4 0V4H0z" fill="#d8d8d8"/></svg>
<!-- sec_dialog -->
<div class="a" style="left:734px;top:10px;width:329px;height:828px;background:#434343;border-left:1px solid #3c3c3c;border-top:1px solid #333;border-right:1px solid #3a3a3a"></div>
<div class="a" style="left:741px;top:18px;width:3px;height:17px;border-left:1px dotted #7a7a7a;border-right:1px dotted #7a7a7a"></div>
<div class="t" style="top:21.8px;font-size:10.5px;color:#ececec;letter-spacing:0.023px;left:752.5px;">Active Viewport - Quad 4 - Perspective</div>
<svg style="left:1038.5px;top:21.5px" width="10" height="10" viewBox="-5.0 -5.0 10 10"><path d="M-3-3L3 3M3-3L-3 3" stroke="#f0f0f0" stroke-width="1.800"/></svg>
<div class="a" style="left:741px;top:37px;width:315px;height:1px;background:#383838;"></div>
<div class="a" style="left:744px;top:63px;width:310px;height:775px;background:#444;border:1px solid #3a3a3a"></div>
<div class="a" style="left:744px;top:42px;width:57px;height:22px;background:#444;border:1px solid #3a3a3a;border-bottom:none"></div>
<div class="a" style="left:801px;top:42px;width:76px;height:21px;background:#3a3a3a;"></div>
<div class="a" style="left:878px;top:42px;width:45px;height:21px;background:#3a3a3a;"></div>
<div class="t" style="top:47.2px;font-size:10.5px;color:#f0f0f0;left:753px;">Settings</div>
<div class="t" style="top:47.8px;font-size:10.5px;color:#a8a8a8;left:811px;">Preferences</div>
<div class="t" style="top:47.8px;font-size:10.5px;color:#a8a8a8;left:888px;">Filter</div>
<div class="t" style="top:83.2px;font-size:10.5px;color:#e6e6e6;left:753px;">Preset:</div>
<div class="a" style="left:791px;top:78px;width:203px;height:20px;background:#646464;border-radius:1px"></div>
<svg style="left:796.5px;top:80.0px" width="16" height="16" viewBox="-8.0 -8.0 16 16"><rect x="-4.500" y="-1" width="9" height="7.500" rx="1" fill="#f0f0f0"/><path d="M-2.800-1V-4A2.800 2.800 0 0 1 2.800-4V-1" fill="none" stroke="#f0f0f0" stroke-width="1.500"/><circle cy="2" r="1.100" fill="#444"/><path d="M0 2V4.500" stroke="#444" stroke-width="1"/></svg>
<div class="t" style="top:83.2px;font-size:10.5px;color:#dcdcdc;left:815.5px;">Standard</div>
<svg style="left:978.0px;top:83.0px" width="10" height="10" viewBox="-5.0 -5.0 10 10"><path d="M-3.500-2.200h7L0 2.600z" fill="#ececec"/></svg>
<svg style="left:999.5px;top:79.0px" width="18" height="18" viewBox="-9.0 -9.0 18 18"><rect x="-1.600" y="-7.500" width="3.200" height="3.500" transform="rotate(0)" fill="#e8e8e8"/><rect x="-1.600" y="-7.500" width="3.200" height="3.500" transform="rotate(45)" fill="#e8e8e8"/><rect x="-1.600" y="-7.500" width="3.200" height="3.500" transform="rotate(90)" fill="#e8e8e8"/><rect x="-1.600" y="-7.500" width="3.200" height="3.500" transform="rotate(135)" fill="#e8e8e8"/><rect x="-1.600" y="-7.500" width="3.200" height="3.500" transform="rotate(180)" fill="#e8e8e8"/><rect x="-1.600" y="-7.500" width="3.200" height="3.500" transform="rotate(225)" fill="#e8e8e8"/><rect x="-1.600" y="-7.500" width="3.200" height="3.500" transform="rotate(270)" fill="#e8e8e8"/><rect x="-1.600" y="-7.500" width="3.200" height="3.500" transform="rotate(315)" fill="#e8e8e8"/><circle r="4.200" fill="none" stroke="#e8e8e8" stroke-width="2.400"/></svg>
<svg style="left:1015px;top:93px" width="3" height="3" viewBox="0 0 4 4"><path d="M4 0V4H0z" fill="#d8d8d8"/></svg>
<svg style="left:1024.0px;top:79.0px" width="18" height="18" viewBox="-9.0 -9.0 18 18"><path d="M-7-7H5L7-5V7H-7z" fill="none" stroke="#686868" stroke-width="1.500"/><rect x="-4" y="-7" width="8" height="5" fill="#686868"/><rect x="-4" y="1.500" width="8" height="5.500" fill="#686868"/></svg>
<div class="a" style="left:747px;top:109px;width:303px;height:38px;border:1px solid #3d3d3d;border-radius:3px;box-shadow:inset 0 0 0 1px #484848"></div>
<div class="t" style="top:123.2px;font-size:10.5px;color:#e6e6e6;right:679.00px;">Rendering Level:</div>
<div class="a" style="left:901px;top:118px;width:140px;height:20px;background:#646464;border-radius:1px"></div><div class="t" style="top:123.2px;font-size:10.5px;color:#dcdcdc;left:907px;">Basic</div><svg style="left:1025.0px;top:123.0px" width="10" height="10" viewBox="-5.0 -5.0 10 10"><path d="M-3.500-2.200h7L0 2.600z" fill="#ececec"/></svg>
<div class="a" style="left:747px;top:158px;width:303px;height:382px;border:1px solid #3d3d3d;border-radius:3px;box-shadow:inset 0 0 0 1px #484848"></div>
<div class="a" style="left:746px;top:150px;width:112px;height:17px;background:#444;"></div>
<div class="t" style="top:153.2px;font-size:10.5px;color:#e6e6e6;left:753px;">Lighting and Shadows</div>
<div class="t" style="top:172.8px;font-size:10.5px;color:#e6e6e6;right:722.50px;">Illuminate:</div>
<div class="a" style="left:857px;top:168px;width:184px;height:19px;background:#646464;border-radius:1px"></div><div class="t" style="top:172.8px;font-size:10.5px;color:#dcdcdc;left:863px;">Default Lights</div><svg style="left:1025.0px;top:172.5px" width="10" height="10" viewBox="-5.0 -5.0 10 10"><path d="M-3.500-2.200h7L0 2.600z" fill="#ececec"/></svg>
<div class="t" style="top:197.2px;font-size:10.5px;color:#e6e6e6;right:722.50px;">Default Lights:</div>
<div class="a" style="left:857px;top:193px;width:184px;height:19px;background:#646464;border-radius:1px"></div><div class="t" style="top:197.8px;font-size:10.5px;color:#dcdcdc;left:863px;">1 Default Light</div><svg style="left:1025.0px;top:197.5px" width="10" height="10" viewBox="-5.0 -5.0 10 10"><path d="M-3.500-2.200h7L0 2.600z" fill="#ececec"/></svg>
<div class="t" style="top:222.2px;font-size:10.5px;color:#e6e6e6;right:722.50px;">Quality:</div>
<div class="a" style="left:758px;top:252.0px;width:11px;height:11px;background:#686868"></div><svg style="left:757.5px;top:251.5px" width="12" height="12" viewBox="-6.0 -6.0 12 12"><path d="M-3.500 .5L-1.200 3L3.800-3.500" fill="none" stroke="#fff" stroke-width="1.800"/></svg>
<div class="t" style="top:252.8px;font-size:10.5px;color:#e6e6e6;left:773.5px;">Highlights</div>
<div class="a" style="left:758px;top:276.5px;width:11px;height:11px;background:#686868"></div>
<div class="t" style="top:277.2px;font-size:10.5px;color:#e6e6e6;left:773.5px;">Auto Display Selected Lights</div>
<div class="a" style="left:758px;top:301.0px;width:11px;height:11px;background:#686868"></div><svg style="left:757.5px;top:300.5px" width="12" height="12" viewBox="-6.0 -6.0 12 12"><path d="M-3.500 .5L-1.200 3L3.800-3.500" fill="none" stroke="#fff" stroke-width="1.800"/></svg>
<div class="t" style="top:301.8px;font-size:10.5px;color:#e6e6e6;left:773.5px;">Reflections From Environment</div>
<div class="a" style="left:757px;top:321px;width:284px;height:1px;background:#3c3c3c;"></div><div class="a" style="left:757px;top:322px;width:284px;height:1px;background:#4a4a4a;"></div>
<div class="a" style="left:758px;top:331.5px;width:11px;height:11px;background:#686868"></div>
<div class="t" style="top:332.2px;font-size:10.5px;color:#e6e6e6;left:773.5px;">Progressive Skylight (more accurate but slower)</div>
<div class="t" style="top:357.2px;font-size:10.5px;color:#e6e6e6;right:612.00px;">Progressive Fade time:</div>
<div class="a" style="left:965px;top:352px;width:76px;height:20px;background:#646464;border-radius:1px"></div><div class="t" style="top:357.2px;font-size:10.5px;color:#e0e0e0;left:970.5px;">4</div><svg style="left:1029.5px;top:356.0px" width="12" height="12" viewBox="-6.0 -6.0 12 12"><path d="M-2.700-.8L0-4.400L2.700-.8zM-2.700 1.200L0 4.800L2.700 1.200z" fill="#c4c4c4"/></svg>
<div class="a" style="left:757px;top:376px;width:284px;height:1px;background:#3c3c3c;"></div><div class="a" style="left:757px;top:377px;width:284px;height:1px;background:#4a4a4a;"></div>
<div class="a" style="left:758px;top:386.5px;width:11px;height:11px;background:#686868"></div>
<div class="t" style="top:387.2px;font-size:10.5px;color:#e6e6e6;left:773.5px;">Shadows</div>
<div class="t" style="top:412.2px;font-size:10.5px;color:#8c8c8c;right:614.50px;">Intensity/Fade:</div>
<div class="a" style="left:965px;top:407px;width:76px;height:20px;background:#5a5a5a;border-radius:1px"></div><div class="t" style="top:412.2px;font-size:10.5px;color:#8c8c8c;left:970.5px;">1.0</div><svg style="left:1029.5px;top:411.0px" width="12" height="12" viewBox="-6.0 -6.0 12 12"><path d="M-2.700-.8L0-4.400L2.700-.8zM-2.700 1.200L0 4.800L2.700 1.200z" fill="#8e8e8e"/></svg>
<div class="a" style="left:757px;top:431px;width:284px;height:1px;background:#3c3c3c;"></div><div class="a" style="left:757px;top:432px;width:284px;height:1px;background:#4a4a4a;"></div>
<div class="a" style="left:758px;top:441.5px;width:11px;height:11px;background:#686868"></div>
<div class="t" style="top:442.2px;font-size:10.5px;color:#e6e6e6;left:773.5px;">Ambient Occlusion</div>
<div class="t" style="top:467.2px;font-size:10.5px;color:#8c8c8c;right:612.00px;">Samples:</div>
<div class="a" style="left:965px;top:462px;width:76px;height:20px;background:#5a5a5a;border-radius:1px"></div><div class="t" style="top:467.2px;font-size:10.5px;color:#8c8c8c;left:970.5px;">64</div><svg style="left:1029.5px;top:466.0px" width="12" height="12" viewBox="-6.0 -6.0 12 12"><path d="M-2.700-.8L0-4.400L2.700-.8zM-2.700 1.200L0 4.800L2.700 1.200z" fill="#8e8e8e"/></svg>
<div class="t" style="top:491.8px;font-size:10.5px;color:#8c8c8c;right:614.50px;">Radius:</div>
<div class="a" style="left:965px;top:487px;width:76px;height:19px;background:#5a5a5a;border-radius:1px"></div><div class="t" style="top:491.8px;font-size:10.5px;color:#8c8c8c;left:970.5px;">3.0</div><svg style="left:1029.5px;top:490.5px" width="12" height="12" viewBox="-6.0 -6.0 12 12"><path d="M-2.700-.8L0-4.400L2.700-.8zM-2.700 1.200L0 4.800L2.700 1.200z" fill="#8e8e8e"/></svg>
<div class="t" style="top:516.2px;font-size:10.5px;color:#8c8c8c;right:612.00px;">Intensity/Fade:</div>
<div class="a" style="left:965px;top:511px;width:76px;height:20px;background:#5a5a5a;border-radius:1px"></div><div class="t" style="top:516.2px;font-size:10.5px;color:#8c8c8c;left:970.5px;">1.5</div><svg style="left:1029.5px;top:515.0px" width="12" height="12" viewBox="-6.0 -6.0 12 12"><path d="M-2.700-.8L0-4.400L2.700-.8zM-2.700 1.200L0 4.800L2.700 1.200z" fill="#8e8e8e"/></svg>
<div class="a" style="left:747px;top:551px;width:303px;height:88px;border:1px solid #3d3d3d;border-radius:3px;box-shadow:inset 0 0 0 1px #484848"></div>
<div class="a" style="left:746px;top:543px;width:114px;height:17px;background:#444;"></div>
<div class="t" style="top:546.2px;font-size:10.5px;color:#e6e6e6;left:753px;">Additional Parameters</div>
<div class="t" style="top:566.2px;font-size:10.5px;color:#e6e6e6;right:679.00px;">Material Rendering Level:</div>
<div class="a" style="left:901px;top:561px;width:140px;height:20px;background:#646464;border-radius:1px"></div><div class="t" style="top:566.2px;font-size:10.5px;color:#dcdcdc;left:907px;">Material Editor Setting</div><svg style="left:1025.0px;top:566.0px" width="10" height="10" viewBox="-5.0 -5.0 10 10"><path d="M-3.500-2.200h7L0 2.600z" fill="#ececec"/></svg>
<div class="t" style="top:590.8px;font-size:10.5px;color:#e6e6e6;right:679.00px;">Material Override:</div>
<div class="a" style="left:901px;top:586px;width:140px;height:19px;background:#646464;border-radius:1px"></div><div class="t" style="top:590.8px;font-size:10.5px;color:#dcdcdc;left:907px;">Off</div><svg style="left:1025.0px;top:590.5px" width="10" height="10" viewBox="-5.0 -5.0 10 10"><path d="M-3.500-2.200h7L0 2.600z" fill="#ececec"/></svg>
<div class="t" style="top:615.2px;font-size:10.5px;color:#e6e6e6;right:679.00px;">Transparency:</div>
<div class="a" style="left:901px;top:610px;width:140px;height:20px;background:#646464;border-radius:1px"></div><div class="t" style="top:615.2px;font-size:10.5px;color:#dcdcdc;left:907px;">Object Sorting</div><svg style="left:1025.0px;top:615.0px" width="10" height="10" viewBox="-5.0 -5.0 10 10"><path d="M-3.500-2.200h7L0 2.600z" fill="#ececec"/></svg>
<div class="a" style="left:747px;top:650px;width:303px;height:143px;border:1px solid #3d3d3d;border-radius:3px;box-shadow:inset 0 0 0 1px #484848"></div>
<div class="a" style="left:752px;top:642px;width:51px;height:16px;background:#444;"></div>
<div class="a" style="left:755px;top:644.5px;width:11px;height:11px;background:#686868"></div>
<div class="t" style="top:645.2px;font-size:10.5px;color:#e6e6e6;left:771px;">Bloom</div>
<div class="a" style="left:918px;top:664.0px;width:11px;height:11px;background:#575757"></div>
<div class="t" style="top:664.8px;font-size:10.5px;color:#8c8c8c;left:934px;">Apply to Background</div>
<div class="t" style="top:689.2px;font-size:10.5px;color:#8c8c8c;right:759.00px;">Radius:</div>
<div class="a" style="left:817px;top:685px;width:64px;height:19px;background:#5a5a5a;border-radius:1px"></div><div class="t" style="top:689.8px;font-size:10.5px;color:#8c8c8c;left:822.5px;">10</div><svg style="left:869.5px;top:688.5px" width="12" height="12" viewBox="-6.0 -6.0 12 12"><path d="M-2.700-.8L0-4.400L2.700-.8zM-2.700 1.200L0 4.800L2.700 1.200z" fill="#8e8e8e"/></svg>
<div class="t" style="top:689.2px;font-size:10.5px;color:#8c8c8c;right:596.00px;">Quality:</div>
<div class="a" style="left:981px;top:685px;width:60px;height:19px;background:#5a5a5a;border-radius:1px"></div><div class="t" style="top:689.8px;font-size:10.5px;color:#8c8c8c;left:986.5px;">4</div><svg style="left:1029.5px;top:688.5px" width="12" height="12" viewBox="-6.0 -6.0 12 12"><path d="M-2.700-.8L0-4.400L2.700-.8zM-2.700 1.200L0 4.800L2.700 1.200z" fill="#8e8e8e"/></svg>
<div class="t" style="top:713.8px;font-size:10.5px;color:#8c8c8c;right:759.00px;">Strength:</div>
<div class="a" style="left:817px;top:709px;width:64px;height:19px;background:#5a5a5a;border-radius:1px"></div><div class="t" style="top:713.8px;font-size:10.5px;color:#8c8c8c;left:822.5px;">0.2</div><svg style="left:869.5px;top:712.5px" width="12" height="12" viewBox="-6.0 -6.0 12 12"><path d="M-2.700-.8L0-4.400L2.700-.8zM-2.700 1.200L0 4.800L2.700 1.200z" fill="#8e8e8e"/></svg>
<div class="t" style="top:713.8px;font-size:10.5px;color:#8c8c8c;right:627.00px;">Tint:</div>
<div class="a" style="left:950px;top:709px;width:26px;height:19px;background:#fff;border-radius:1px"></div>
<div class="a" style="left:981px;top:709px;width:60px;height:19px;background:#5a5a5a;border-radius:1px"></div><div class="t" style="top:713.8px;font-size:10.5px;color:#8c8c8c;left:986.5px;">1.0</div><svg style="left:1029.5px;top:712.5px" width="12" height="12" viewBox="-6.0 -6.0 12 12"><path d="M-2.700-.8L0-4.400L2.700-.8zM-2.700 1.200L0 4.800L2.700 1.200z" fill="#8e8e8e"/></svg>
<div class="t" style="top:738.2px;font-size:10.5px;color:#8c8c8c;right:759.00px;">Threshold:</div>
<div class="a" style="left:817px;top:734px;width:64px;height:19px;background:#5a5a5a;border-radius:1px"></div><div class="t" style="top:738.8px;font-size:10.5px;color:#8c8c8c;left:822.5px;">0.2</div><svg style="left:869.5px;top:737.5px" width="12" height="12" viewBox="-6.0 -6.0 12 12"><path d="M-2.700-.8L0-4.400L2.700-.8zM-2.700 1.200L0 4.800L2.700 1.200z" fill="#8e8e8e"/></svg>
<div class="t" style="top:738.2px;font-size:10.5px;color:#8c8c8c;right:596.00px;">Smoothing:</div>
<div class="a" style="left:981px;top:734px;width:60px;height:19px;background:#5a5a5a;border-radius:1px"></div><div class="t" style="top:738.8px;font-size:10.5px;color:#8c8c8c;left:986.5px;">0.8</div><svg style="left:1029.5px;top:737.5px" width="12" height="12" viewBox="-6.0 -6.0 12 12"><path d="M-2.700-.8L0-4.400L2.700-.8zM-2.700 1.200L0 4.800L2.700 1.200z" fill="#8e8e8e"/></svg>
<div class="a" style="left:757px;top:757px;width:284px;height:1px;background:#3c3c3c;"></div><div class="a" style="left:757px;top:758px;width:284px;height:1px;background:#4a4a4a;"></div>
<div class="a" style="left:758px;top:768.5px;width:11px;height:11px;background:#575757"></div>
<div class="t" style="top:769.2px;font-size:10.5px;color:#8c8c8c;left:773.5px;">DirtMap</div>
<div class="a" style="left:817px;top:764px;width:159px;height:20px;background:#555;border-radius:3px"></div>
<div class="t" style="top:769.2px;font-size:10.5px;color:#8c8c8c;left:746.50px;width:300px;text-align:center;">&lt;&lt; No image &gt;&gt;</div>
<div class="a" style="left:981px;top:764px;width:60px;height:20px;background:#5a5a5a;border-radius:1px"></div><div class="t" style="top:769.2px;font-size:10.5px;color:#8c8c8c;left:986.5px;">1.0</div><svg style="left:1029.5px;top:768.0px" width="12" height="12" viewBox="-6.0 -6.0 12 12"><path d="M-2.700-.8L0-4.400L2.700-.8zM-2.700 1.200L0 4.800L2.700 1.200z" fill="#8e8e8e"/></svg>
<div class="a" style="left:857px;top:212px;width:185px;height:38px;background:#545454;border:1px solid #333;box-shadow:1px 2px 3px rgba(0,0,0,.45)"></div>
<div class="a" style="left:858px;top:231px;width:183px;height:18px;background:#4a6898;"></div>
<div class="t" style="top:217.2px;font-size:10.5px;color:#f0f0f0;left:863px;">1 Default Light</div>
<div class="t" style="top:235.2px;font-size:10.5px;color:#f0f0f0;left:863px;">2 Default Lights</div>
<div class="a" style="left:774px;top:190px;width:81px;height:24px;border:5px solid #ed1c24"></div>
<div class="a" style="left:851px;top:229px;width:107px;height:25px;border:5px solid #ed1c24"></div>
<svg style="left:905px;top:237.500px" width="25" height="36" viewBox="0 0 26 38"><path d="M2 2V29L8.500 23L13.500 34.500L18.500 32.300L13.500 21H22.500z" fill="#fff" stroke="#000" stroke-width="1.600" stroke-linejoin="round"/></svg>
</div></body></html>
